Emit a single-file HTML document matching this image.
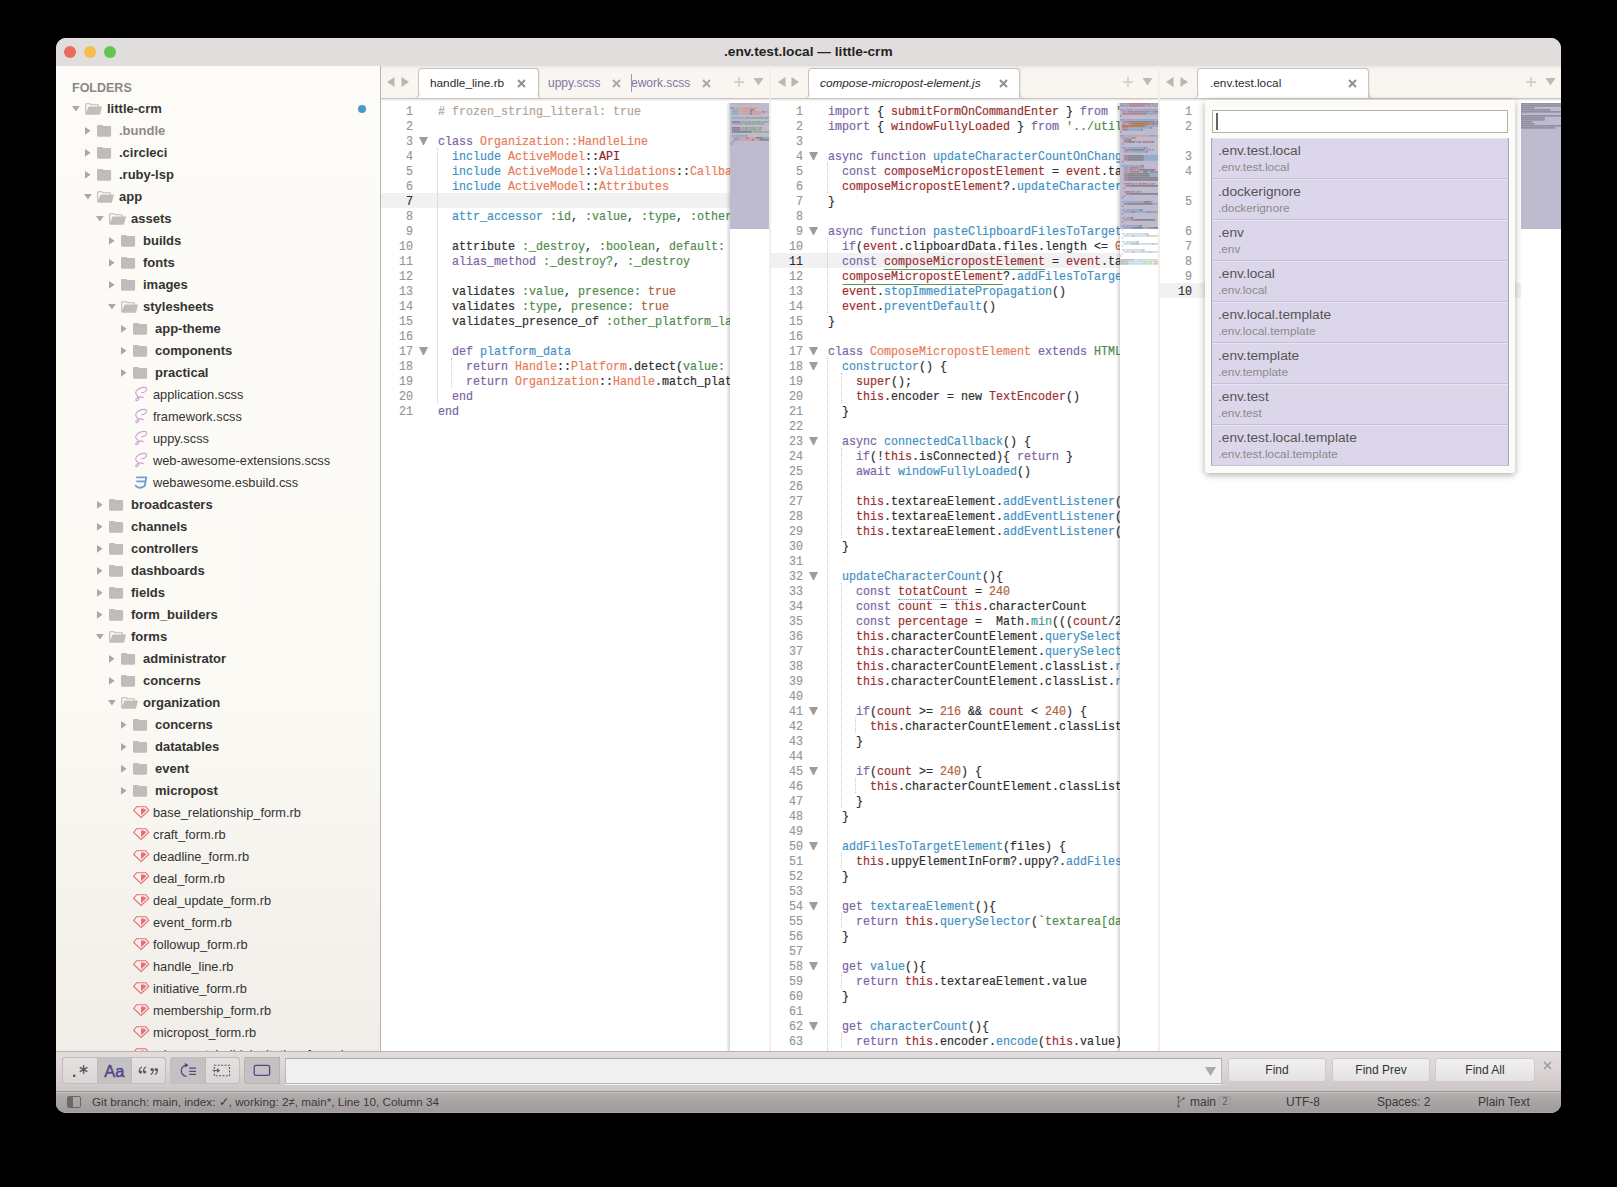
<!DOCTYPE html>
<html><head><meta charset="utf-8"><style>
*{margin:0;padding:0;box-sizing:border-box}
html,body{width:1617px;height:1187px;background:#000;overflow:hidden}
body{position:relative;font-family:"Liberation Sans",sans-serif}
div,span.a{position:absolute}
svg{display:block}
.code{font-family:"Liberation Mono",monospace;font-size:13px;line-height:15px;color:#2e2e2e;white-space:pre;transform:scaleX(0.8974358974358975);transform-origin:0 0;-webkit-text-stroke:0.2px}
.c{color:#b4a393} .k{color:#7b63a6} .t{color:#e97a55} .f{color:#3f91c2}
.s{color:#4f8c4c} .n{color:#b2603a} .v{color:#9a2e2f} .m{color:#3a9f92} .r{color:#8e2426}
.u{color:#9a2e2f;border-bottom:1px solid #5a9a58}
.w{color:#9a2e2f;border-bottom:1px dotted #4a8fc8}
.ln{font-family:"Liberation Mono",monospace;font-size:13px;line-height:15px;color:#9a9a9a;text-align:right;white-space:pre}
.side{font-size:12.8px;color:#333;line-height:22px;white-space:pre}
.fold{width:0;height:0;border-left:4.5px solid transparent;border-right:4.5px solid transparent;border-top:8px solid #9d9d9d}
.tri-r{width:0;height:0;border-top:3.5px solid transparent;border-bottom:3.5px solid transparent;border-left:6.5px solid #aaa7a4}
.tri-d{width:0;height:0;border-left:3.75px solid transparent;border-right:3.75px solid transparent;border-top:6px solid #aaa7a4}
</style></head>
<body>
<div style="left:56px;top:38px;width:1505px;height:1075px;border-radius:10px;overflow:hidden;background:#fff"><div style="left:0px;top:0px;width:1505px;height:28px;background:#e2dddd"></div><div style="left:8px;top:8px;width:12px;height:12px;background:#ec6a5e;border-radius:50%"></div><div style="left:28px;top:8px;width:12px;height:12px;background:#f4bf4f;border-radius:50%"></div><div style="left:48px;top:8px;width:12px;height:12px;background:#61c554;border-radius:50%"></div><div style="left:668px;top:6px;white-space:pre;font-weight:bold;font-size:13.7px;color:#1e2324;line-height:16px">.env.test.local — little-crm</div><div style="left:0px;top:28px;width:324px;height:985px;background:linear-gradient(#fdfbf7 0%,#fcfaf5 62%,#f1eee9 100%)"></div><div style="left:324px;top:28px;width:1px;height:985px;background:#b9b4b1"></div><div style="left:16px;top:42px;white-space:pre;font-weight:bold;font-size:12.5px;color:#8a8886;line-height:16px">FOLDERS</div><div style="left:16px;top:60px;width:20px;height:20px;"><svg width="20" height="20" viewBox="0 0 20 20"><path d="M0 8 L7.8 8 L3.9 13.4 Z" fill="#aba7a4"/></svg></div><div style="left:28px;top:60px;width:20px;height:20px;"><svg width="20" height="20" viewBox="0 0 20 20"><path d="M1.7 15.5 L1.7 6.3 Q1.7 5.7 2.3 5.7 L6.3 5.7 L7 6.7 L13.4 6.7 Q14.3 6.7 14.3 7.6 L14.3 9" fill="none" stroke="#bdb9b6" stroke-width="1.1"/><path d="M4.2 9.3 Q4.4 8.6 5.1 8.6 L17.4 8.6 Q18.1 8.6 17.9 9.3 L16.1 15.9 Q15.9 16.7 15.1 16.7 L2.2 16.7 Q1.3 16.7 1.5 15.9 Z" fill="#c1bdba"/></svg></div><div style="left:51px;top:60px;white-space:pre;font-size:13px;font-weight:bold;color:#333;line-height:22px">little-crm</div><div style="left:28px;top:82px;width:20px;height:20px;"><svg width="20" height="20" viewBox="0 0 20 20"><path d="M1 6.9 L6.6 10.85 L1 14.8 Z" fill="#aba7a4"/></svg></div><div style="left:40px;top:82px;width:20px;height:20px;"><svg width="20" height="20" viewBox="0 0 20 20"><path d="M1 6.3 Q1 5.1 2.2 5.1 L6.2 5.1 Q6.8 5.1 7.2 6.1 L14 6.1 Q15.1 6.1 15.1 7.2 L15.1 15.6 Q15.1 16.7 14 16.7 L2.1 16.7 Q1 16.7 1 15.6 Z" fill="#c0bcb9"/></svg></div><div style="left:63px;top:82px;white-space:pre;font-size:13px;font-weight:bold;color:#8d8a88;line-height:22px">.bundle</div><div style="left:28px;top:104px;width:20px;height:20px;"><svg width="20" height="20" viewBox="0 0 20 20"><path d="M1 6.9 L6.6 10.85 L1 14.8 Z" fill="#aba7a4"/></svg></div><div style="left:40px;top:104px;width:20px;height:20px;"><svg width="20" height="20" viewBox="0 0 20 20"><path d="M1 6.3 Q1 5.1 2.2 5.1 L6.2 5.1 Q6.8 5.1 7.2 6.1 L14 6.1 Q15.1 6.1 15.1 7.2 L15.1 15.6 Q15.1 16.7 14 16.7 L2.1 16.7 Q1 16.7 1 15.6 Z" fill="#c0bcb9"/></svg></div><div style="left:63px;top:104px;white-space:pre;font-size:13px;font-weight:bold;color:#333;line-height:22px">.circleci</div><div style="left:28px;top:126px;width:20px;height:20px;"><svg width="20" height="20" viewBox="0 0 20 20"><path d="M1 6.9 L6.6 10.85 L1 14.8 Z" fill="#aba7a4"/></svg></div><div style="left:40px;top:126px;width:20px;height:20px;"><svg width="20" height="20" viewBox="0 0 20 20"><path d="M1 6.3 Q1 5.1 2.2 5.1 L6.2 5.1 Q6.8 5.1 7.2 6.1 L14 6.1 Q15.1 6.1 15.1 7.2 L15.1 15.6 Q15.1 16.7 14 16.7 L2.1 16.7 Q1 16.7 1 15.6 Z" fill="#c0bcb9"/></svg></div><div style="left:63px;top:126px;white-space:pre;font-size:13px;font-weight:bold;color:#333;line-height:22px">.ruby-lsp</div><div style="left:28px;top:148px;width:20px;height:20px;"><svg width="20" height="20" viewBox="0 0 20 20"><path d="M0 8 L7.8 8 L3.9 13.4 Z" fill="#aba7a4"/></svg></div><div style="left:40px;top:148px;width:20px;height:20px;"><svg width="20" height="20" viewBox="0 0 20 20"><path d="M1.7 15.5 L1.7 6.3 Q1.7 5.7 2.3 5.7 L6.3 5.7 L7 6.7 L13.4 6.7 Q14.3 6.7 14.3 7.6 L14.3 9" fill="none" stroke="#bdb9b6" stroke-width="1.1"/><path d="M4.2 9.3 Q4.4 8.6 5.1 8.6 L17.4 8.6 Q18.1 8.6 17.9 9.3 L16.1 15.9 Q15.9 16.7 15.1 16.7 L2.2 16.7 Q1.3 16.7 1.5 15.9 Z" fill="#c1bdba"/></svg></div><div style="left:63px;top:148px;white-space:pre;font-size:13px;font-weight:bold;color:#333;line-height:22px">app</div><div style="left:40px;top:170px;width:20px;height:20px;"><svg width="20" height="20" viewBox="0 0 20 20"><path d="M0 8 L7.8 8 L3.9 13.4 Z" fill="#aba7a4"/></svg></div><div style="left:52px;top:170px;width:20px;height:20px;"><svg width="20" height="20" viewBox="0 0 20 20"><path d="M1.7 15.5 L1.7 6.3 Q1.7 5.7 2.3 5.7 L6.3 5.7 L7 6.7 L13.4 6.7 Q14.3 6.7 14.3 7.6 L14.3 9" fill="none" stroke="#bdb9b6" stroke-width="1.1"/><path d="M4.2 9.3 Q4.4 8.6 5.1 8.6 L17.4 8.6 Q18.1 8.6 17.9 9.3 L16.1 15.9 Q15.9 16.7 15.1 16.7 L2.2 16.7 Q1.3 16.7 1.5 15.9 Z" fill="#c1bdba"/></svg></div><div style="left:75px;top:170px;white-space:pre;font-size:13px;font-weight:bold;color:#333;line-height:22px">assets</div><div style="left:52px;top:192px;width:20px;height:20px;"><svg width="20" height="20" viewBox="0 0 20 20"><path d="M1 6.9 L6.6 10.85 L1 14.8 Z" fill="#aba7a4"/></svg></div><div style="left:64px;top:192px;width:20px;height:20px;"><svg width="20" height="20" viewBox="0 0 20 20"><path d="M1 6.3 Q1 5.1 2.2 5.1 L6.2 5.1 Q6.8 5.1 7.2 6.1 L14 6.1 Q15.1 6.1 15.1 7.2 L15.1 15.6 Q15.1 16.7 14 16.7 L2.1 16.7 Q1 16.7 1 15.6 Z" fill="#c0bcb9"/></svg></div><div style="left:87px;top:192px;white-space:pre;font-size:13px;font-weight:bold;color:#333;line-height:22px">builds</div><div style="left:52px;top:214px;width:20px;height:20px;"><svg width="20" height="20" viewBox="0 0 20 20"><path d="M1 6.9 L6.6 10.85 L1 14.8 Z" fill="#aba7a4"/></svg></div><div style="left:64px;top:214px;width:20px;height:20px;"><svg width="20" height="20" viewBox="0 0 20 20"><path d="M1 6.3 Q1 5.1 2.2 5.1 L6.2 5.1 Q6.8 5.1 7.2 6.1 L14 6.1 Q15.1 6.1 15.1 7.2 L15.1 15.6 Q15.1 16.7 14 16.7 L2.1 16.7 Q1 16.7 1 15.6 Z" fill="#c0bcb9"/></svg></div><div style="left:87px;top:214px;white-space:pre;font-size:13px;font-weight:bold;color:#333;line-height:22px">fonts</div><div style="left:52px;top:236px;width:20px;height:20px;"><svg width="20" height="20" viewBox="0 0 20 20"><path d="M1 6.9 L6.6 10.85 L1 14.8 Z" fill="#aba7a4"/></svg></div><div style="left:64px;top:236px;width:20px;height:20px;"><svg width="20" height="20" viewBox="0 0 20 20"><path d="M1 6.3 Q1 5.1 2.2 5.1 L6.2 5.1 Q6.8 5.1 7.2 6.1 L14 6.1 Q15.1 6.1 15.1 7.2 L15.1 15.6 Q15.1 16.7 14 16.7 L2.1 16.7 Q1 16.7 1 15.6 Z" fill="#c0bcb9"/></svg></div><div style="left:87px;top:236px;white-space:pre;font-size:13px;font-weight:bold;color:#333;line-height:22px">images</div><div style="left:52px;top:258px;width:20px;height:20px;"><svg width="20" height="20" viewBox="0 0 20 20"><path d="M0 8 L7.8 8 L3.9 13.4 Z" fill="#aba7a4"/></svg></div><div style="left:64px;top:258px;width:20px;height:20px;"><svg width="20" height="20" viewBox="0 0 20 20"><path d="M1.7 15.5 L1.7 6.3 Q1.7 5.7 2.3 5.7 L6.3 5.7 L7 6.7 L13.4 6.7 Q14.3 6.7 14.3 7.6 L14.3 9" fill="none" stroke="#bdb9b6" stroke-width="1.1"/><path d="M4.2 9.3 Q4.4 8.6 5.1 8.6 L17.4 8.6 Q18.1 8.6 17.9 9.3 L16.1 15.9 Q15.9 16.7 15.1 16.7 L2.2 16.7 Q1.3 16.7 1.5 15.9 Z" fill="#c1bdba"/></svg></div><div style="left:87px;top:258px;white-space:pre;font-size:13px;font-weight:bold;color:#333;line-height:22px">stylesheets</div><div style="left:64px;top:280px;width:20px;height:20px;"><svg width="20" height="20" viewBox="0 0 20 20"><path d="M1 6.9 L6.6 10.85 L1 14.8 Z" fill="#aba7a4"/></svg></div><div style="left:76px;top:280px;width:20px;height:20px;"><svg width="20" height="20" viewBox="0 0 20 20"><path d="M1 6.3 Q1 5.1 2.2 5.1 L6.2 5.1 Q6.8 5.1 7.2 6.1 L14 6.1 Q15.1 6.1 15.1 7.2 L15.1 15.6 Q15.1 16.7 14 16.7 L2.1 16.7 Q1 16.7 1 15.6 Z" fill="#c0bcb9"/></svg></div><div style="left:99px;top:280px;white-space:pre;font-size:13px;font-weight:bold;color:#333;line-height:22px">app-theme</div><div style="left:64px;top:302px;width:20px;height:20px;"><svg width="20" height="20" viewBox="0 0 20 20"><path d="M1 6.9 L6.6 10.85 L1 14.8 Z" fill="#aba7a4"/></svg></div><div style="left:76px;top:302px;width:20px;height:20px;"><svg width="20" height="20" viewBox="0 0 20 20"><path d="M1 6.3 Q1 5.1 2.2 5.1 L6.2 5.1 Q6.8 5.1 7.2 6.1 L14 6.1 Q15.1 6.1 15.1 7.2 L15.1 15.6 Q15.1 16.7 14 16.7 L2.1 16.7 Q1 16.7 1 15.6 Z" fill="#c0bcb9"/></svg></div><div style="left:99px;top:302px;white-space:pre;font-size:13px;font-weight:bold;color:#333;line-height:22px">components</div><div style="left:64px;top:324px;width:20px;height:20px;"><svg width="20" height="20" viewBox="0 0 20 20"><path d="M1 6.9 L6.6 10.85 L1 14.8 Z" fill="#aba7a4"/></svg></div><div style="left:76px;top:324px;width:20px;height:20px;"><svg width="20" height="20" viewBox="0 0 20 20"><path d="M1 6.3 Q1 5.1 2.2 5.1 L6.2 5.1 Q6.8 5.1 7.2 6.1 L14 6.1 Q15.1 6.1 15.1 7.2 L15.1 15.6 Q15.1 16.7 14 16.7 L2.1 16.7 Q1 16.7 1 15.6 Z" fill="#c0bcb9"/></svg></div><div style="left:99px;top:324px;white-space:pre;font-size:13px;font-weight:bold;color:#333;line-height:22px">practical</div><div style="left:74px;top:346px;width:20px;height:20px;"><svg width="20" height="20" viewBox="0 0 20 20"><path d="M11.5 8.8 C14 8.7 16.9 7 16.6 4.8 C16.3 2.6 11.5 3.1 8.2 5.3 C4.8 7.6 5 10 7.6 12 C9.3 13.3 9.4 15.6 7.2 16.5 C5.6 17.1 5.1 15.6 6.8 14.3 C8.4 13.1 11 12.4 13.3 13.7" fill="none" stroke="#cf9fd8" stroke-width="1.1" stroke-linecap="round"/></svg></div><div style="left:97px;top:346px;white-space:pre;font-size:12.8px;color:#333;line-height:22px">application.scss</div><div style="left:74px;top:368px;width:20px;height:20px;"><svg width="20" height="20" viewBox="0 0 20 20"><path d="M11.5 8.8 C14 8.7 16.9 7 16.6 4.8 C16.3 2.6 11.5 3.1 8.2 5.3 C4.8 7.6 5 10 7.6 12 C9.3 13.3 9.4 15.6 7.2 16.5 C5.6 17.1 5.1 15.6 6.8 14.3 C8.4 13.1 11 12.4 13.3 13.7" fill="none" stroke="#cf9fd8" stroke-width="1.1" stroke-linecap="round"/></svg></div><div style="left:97px;top:368px;white-space:pre;font-size:12.8px;color:#333;line-height:22px">framework.scss</div><div style="left:74px;top:390px;width:20px;height:20px;"><svg width="20" height="20" viewBox="0 0 20 20"><path d="M11.5 8.8 C14 8.7 16.9 7 16.6 4.8 C16.3 2.6 11.5 3.1 8.2 5.3 C4.8 7.6 5 10 7.6 12 C9.3 13.3 9.4 15.6 7.2 16.5 C5.6 17.1 5.1 15.6 6.8 14.3 C8.4 13.1 11 12.4 13.3 13.7" fill="none" stroke="#cf9fd8" stroke-width="1.1" stroke-linecap="round"/></svg></div><div style="left:97px;top:390px;white-space:pre;font-size:12.8px;color:#333;line-height:22px">uppy.scss</div><div style="left:74px;top:412px;width:20px;height:20px;"><svg width="20" height="20" viewBox="0 0 20 20"><path d="M11.5 8.8 C14 8.7 16.9 7 16.6 4.8 C16.3 2.6 11.5 3.1 8.2 5.3 C4.8 7.6 5 10 7.6 12 C9.3 13.3 9.4 15.6 7.2 16.5 C5.6 17.1 5.1 15.6 6.8 14.3 C8.4 13.1 11 12.4 13.3 13.7" fill="none" stroke="#cf9fd8" stroke-width="1.1" stroke-linecap="round"/></svg></div><div style="left:97px;top:412px;white-space:pre;font-size:12.8px;color:#333;line-height:22px">web-awesome-extensions.scss</div><div style="left:74px;top:434px;width:20px;height:20px;"><svg width="20" height="20" viewBox="0 0 20 20"><path d="M7 5.4 L16.4 5.4 L14.6 14 Q12 15.7 9.4 15.8 Q7.3 15.2 5.6 13.6" fill="none" stroke="#6c9fd4" stroke-width="1.8" stroke-linejoin="round" stroke-linecap="round"/><path d="M6.3 9.4 L15 9.4" stroke="#6c9fd4" stroke-width="1.8"/></svg></div><div style="left:97px;top:434px;white-space:pre;font-size:12.8px;color:#333;line-height:22px">webawesome.esbuild.css</div><div style="left:40px;top:456px;width:20px;height:20px;"><svg width="20" height="20" viewBox="0 0 20 20"><path d="M1 6.9 L6.6 10.85 L1 14.8 Z" fill="#aba7a4"/></svg></div><div style="left:52px;top:456px;width:20px;height:20px;"><svg width="20" height="20" viewBox="0 0 20 20"><path d="M1 6.3 Q1 5.1 2.2 5.1 L6.2 5.1 Q6.8 5.1 7.2 6.1 L14 6.1 Q15.1 6.1 15.1 7.2 L15.1 15.6 Q15.1 16.7 14 16.7 L2.1 16.7 Q1 16.7 1 15.6 Z" fill="#c0bcb9"/></svg></div><div style="left:75px;top:456px;white-space:pre;font-size:13px;font-weight:bold;color:#333;line-height:22px">broadcasters</div><div style="left:40px;top:478px;width:20px;height:20px;"><svg width="20" height="20" viewBox="0 0 20 20"><path d="M1 6.9 L6.6 10.85 L1 14.8 Z" fill="#aba7a4"/></svg></div><div style="left:52px;top:478px;width:20px;height:20px;"><svg width="20" height="20" viewBox="0 0 20 20"><path d="M1 6.3 Q1 5.1 2.2 5.1 L6.2 5.1 Q6.8 5.1 7.2 6.1 L14 6.1 Q15.1 6.1 15.1 7.2 L15.1 15.6 Q15.1 16.7 14 16.7 L2.1 16.7 Q1 16.7 1 15.6 Z" fill="#c0bcb9"/></svg></div><div style="left:75px;top:478px;white-space:pre;font-size:13px;font-weight:bold;color:#333;line-height:22px">channels</div><div style="left:40px;top:500px;width:20px;height:20px;"><svg width="20" height="20" viewBox="0 0 20 20"><path d="M1 6.9 L6.6 10.85 L1 14.8 Z" fill="#aba7a4"/></svg></div><div style="left:52px;top:500px;width:20px;height:20px;"><svg width="20" height="20" viewBox="0 0 20 20"><path d="M1 6.3 Q1 5.1 2.2 5.1 L6.2 5.1 Q6.8 5.1 7.2 6.1 L14 6.1 Q15.1 6.1 15.1 7.2 L15.1 15.6 Q15.1 16.7 14 16.7 L2.1 16.7 Q1 16.7 1 15.6 Z" fill="#c0bcb9"/></svg></div><div style="left:75px;top:500px;white-space:pre;font-size:13px;font-weight:bold;color:#333;line-height:22px">controllers</div><div style="left:40px;top:522px;width:20px;height:20px;"><svg width="20" height="20" viewBox="0 0 20 20"><path d="M1 6.9 L6.6 10.85 L1 14.8 Z" fill="#aba7a4"/></svg></div><div style="left:52px;top:522px;width:20px;height:20px;"><svg width="20" height="20" viewBox="0 0 20 20"><path d="M1 6.3 Q1 5.1 2.2 5.1 L6.2 5.1 Q6.8 5.1 7.2 6.1 L14 6.1 Q15.1 6.1 15.1 7.2 L15.1 15.6 Q15.1 16.7 14 16.7 L2.1 16.7 Q1 16.7 1 15.6 Z" fill="#c0bcb9"/></svg></div><div style="left:75px;top:522px;white-space:pre;font-size:13px;font-weight:bold;color:#333;line-height:22px">dashboards</div><div style="left:40px;top:544px;width:20px;height:20px;"><svg width="20" height="20" viewBox="0 0 20 20"><path d="M1 6.9 L6.6 10.85 L1 14.8 Z" fill="#aba7a4"/></svg></div><div style="left:52px;top:544px;width:20px;height:20px;"><svg width="20" height="20" viewBox="0 0 20 20"><path d="M1 6.3 Q1 5.1 2.2 5.1 L6.2 5.1 Q6.8 5.1 7.2 6.1 L14 6.1 Q15.1 6.1 15.1 7.2 L15.1 15.6 Q15.1 16.7 14 16.7 L2.1 16.7 Q1 16.7 1 15.6 Z" fill="#c0bcb9"/></svg></div><div style="left:75px;top:544px;white-space:pre;font-size:13px;font-weight:bold;color:#333;line-height:22px">fields</div><div style="left:40px;top:566px;width:20px;height:20px;"><svg width="20" height="20" viewBox="0 0 20 20"><path d="M1 6.9 L6.6 10.85 L1 14.8 Z" fill="#aba7a4"/></svg></div><div style="left:52px;top:566px;width:20px;height:20px;"><svg width="20" height="20" viewBox="0 0 20 20"><path d="M1 6.3 Q1 5.1 2.2 5.1 L6.2 5.1 Q6.8 5.1 7.2 6.1 L14 6.1 Q15.1 6.1 15.1 7.2 L15.1 15.6 Q15.1 16.7 14 16.7 L2.1 16.7 Q1 16.7 1 15.6 Z" fill="#c0bcb9"/></svg></div><div style="left:75px;top:566px;white-space:pre;font-size:13px;font-weight:bold;color:#333;line-height:22px">form_builders</div><div style="left:40px;top:588px;width:20px;height:20px;"><svg width="20" height="20" viewBox="0 0 20 20"><path d="M0 8 L7.8 8 L3.9 13.4 Z" fill="#aba7a4"/></svg></div><div style="left:52px;top:588px;width:20px;height:20px;"><svg width="20" height="20" viewBox="0 0 20 20"><path d="M1.7 15.5 L1.7 6.3 Q1.7 5.7 2.3 5.7 L6.3 5.7 L7 6.7 L13.4 6.7 Q14.3 6.7 14.3 7.6 L14.3 9" fill="none" stroke="#bdb9b6" stroke-width="1.1"/><path d="M4.2 9.3 Q4.4 8.6 5.1 8.6 L17.4 8.6 Q18.1 8.6 17.9 9.3 L16.1 15.9 Q15.9 16.7 15.1 16.7 L2.2 16.7 Q1.3 16.7 1.5 15.9 Z" fill="#c1bdba"/></svg></div><div style="left:75px;top:588px;white-space:pre;font-size:13px;font-weight:bold;color:#333;line-height:22px">forms</div><div style="left:52px;top:610px;width:20px;height:20px;"><svg width="20" height="20" viewBox="0 0 20 20"><path d="M1 6.9 L6.6 10.85 L1 14.8 Z" fill="#aba7a4"/></svg></div><div style="left:64px;top:610px;width:20px;height:20px;"><svg width="20" height="20" viewBox="0 0 20 20"><path d="M1 6.3 Q1 5.1 2.2 5.1 L6.2 5.1 Q6.8 5.1 7.2 6.1 L14 6.1 Q15.1 6.1 15.1 7.2 L15.1 15.6 Q15.1 16.7 14 16.7 L2.1 16.7 Q1 16.7 1 15.6 Z" fill="#c0bcb9"/></svg></div><div style="left:87px;top:610px;white-space:pre;font-size:13px;font-weight:bold;color:#333;line-height:22px">administrator</div><div style="left:52px;top:632px;width:20px;height:20px;"><svg width="20" height="20" viewBox="0 0 20 20"><path d="M1 6.9 L6.6 10.85 L1 14.8 Z" fill="#aba7a4"/></svg></div><div style="left:64px;top:632px;width:20px;height:20px;"><svg width="20" height="20" viewBox="0 0 20 20"><path d="M1 6.3 Q1 5.1 2.2 5.1 L6.2 5.1 Q6.8 5.1 7.2 6.1 L14 6.1 Q15.1 6.1 15.1 7.2 L15.1 15.6 Q15.1 16.7 14 16.7 L2.1 16.7 Q1 16.7 1 15.6 Z" fill="#c0bcb9"/></svg></div><div style="left:87px;top:632px;white-space:pre;font-size:13px;font-weight:bold;color:#333;line-height:22px">concerns</div><div style="left:52px;top:654px;width:20px;height:20px;"><svg width="20" height="20" viewBox="0 0 20 20"><path d="M0 8 L7.8 8 L3.9 13.4 Z" fill="#aba7a4"/></svg></div><div style="left:64px;top:654px;width:20px;height:20px;"><svg width="20" height="20" viewBox="0 0 20 20"><path d="M1.7 15.5 L1.7 6.3 Q1.7 5.7 2.3 5.7 L6.3 5.7 L7 6.7 L13.4 6.7 Q14.3 6.7 14.3 7.6 L14.3 9" fill="none" stroke="#bdb9b6" stroke-width="1.1"/><path d="M4.2 9.3 Q4.4 8.6 5.1 8.6 L17.4 8.6 Q18.1 8.6 17.9 9.3 L16.1 15.9 Q15.9 16.7 15.1 16.7 L2.2 16.7 Q1.3 16.7 1.5 15.9 Z" fill="#c1bdba"/></svg></div><div style="left:87px;top:654px;white-space:pre;font-size:13px;font-weight:bold;color:#333;line-height:22px">organization</div><div style="left:64px;top:676px;width:20px;height:20px;"><svg width="20" height="20" viewBox="0 0 20 20"><path d="M1 6.9 L6.6 10.85 L1 14.8 Z" fill="#aba7a4"/></svg></div><div style="left:76px;top:676px;width:20px;height:20px;"><svg width="20" height="20" viewBox="0 0 20 20"><path d="M1 6.3 Q1 5.1 2.2 5.1 L6.2 5.1 Q6.8 5.1 7.2 6.1 L14 6.1 Q15.1 6.1 15.1 7.2 L15.1 15.6 Q15.1 16.7 14 16.7 L2.1 16.7 Q1 16.7 1 15.6 Z" fill="#c0bcb9"/></svg></div><div style="left:99px;top:676px;white-space:pre;font-size:13px;font-weight:bold;color:#333;line-height:22px">concerns</div><div style="left:64px;top:698px;width:20px;height:20px;"><svg width="20" height="20" viewBox="0 0 20 20"><path d="M1 6.9 L6.6 10.85 L1 14.8 Z" fill="#aba7a4"/></svg></div><div style="left:76px;top:698px;width:20px;height:20px;"><svg width="20" height="20" viewBox="0 0 20 20"><path d="M1 6.3 Q1 5.1 2.2 5.1 L6.2 5.1 Q6.8 5.1 7.2 6.1 L14 6.1 Q15.1 6.1 15.1 7.2 L15.1 15.6 Q15.1 16.7 14 16.7 L2.1 16.7 Q1 16.7 1 15.6 Z" fill="#c0bcb9"/></svg></div><div style="left:99px;top:698px;white-space:pre;font-size:13px;font-weight:bold;color:#333;line-height:22px">datatables</div><div style="left:64px;top:720px;width:20px;height:20px;"><svg width="20" height="20" viewBox="0 0 20 20"><path d="M1 6.9 L6.6 10.85 L1 14.8 Z" fill="#aba7a4"/></svg></div><div style="left:76px;top:720px;width:20px;height:20px;"><svg width="20" height="20" viewBox="0 0 20 20"><path d="M1 6.3 Q1 5.1 2.2 5.1 L6.2 5.1 Q6.8 5.1 7.2 6.1 L14 6.1 Q15.1 6.1 15.1 7.2 L15.1 15.6 Q15.1 16.7 14 16.7 L2.1 16.7 Q1 16.7 1 15.6 Z" fill="#c0bcb9"/></svg></div><div style="left:99px;top:720px;white-space:pre;font-size:13px;font-weight:bold;color:#333;line-height:22px">event</div><div style="left:64px;top:742px;width:20px;height:20px;"><svg width="20" height="20" viewBox="0 0 20 20"><path d="M1 6.9 L6.6 10.85 L1 14.8 Z" fill="#aba7a4"/></svg></div><div style="left:76px;top:742px;width:20px;height:20px;"><svg width="20" height="20" viewBox="0 0 20 20"><path d="M1 6.3 Q1 5.1 2.2 5.1 L6.2 5.1 Q6.8 5.1 7.2 6.1 L14 6.1 Q15.1 6.1 15.1 7.2 L15.1 15.6 Q15.1 16.7 14 16.7 L2.1 16.7 Q1 16.7 1 15.6 Z" fill="#c0bcb9"/></svg></div><div style="left:99px;top:742px;white-space:pre;font-size:13px;font-weight:bold;color:#333;line-height:22px">micropost</div><div style="left:74px;top:764px;width:20px;height:20px;"><svg width="20" height="20" viewBox="0 0 20 20"><path d="M6.6 4.7 L15.8 4.7 L18.7 8.4 L11.15 15.5 L3.6 8.4 Z" fill="none" stroke="#ea6c74" stroke-width="1.15" stroke-linejoin="miter"/><path d="M11 6.5 L13.6 6.5 Q15.8 7.2 16.1 8.6 L11 13.3 Z" fill="#ea6c74"/></svg></div><div style="left:97px;top:764px;white-space:pre;font-size:12.8px;color:#333;line-height:22px">base_relationship_form.rb</div><div style="left:74px;top:786px;width:20px;height:20px;"><svg width="20" height="20" viewBox="0 0 20 20"><path d="M6.6 4.7 L15.8 4.7 L18.7 8.4 L11.15 15.5 L3.6 8.4 Z" fill="none" stroke="#ea6c74" stroke-width="1.15" stroke-linejoin="miter"/><path d="M11 6.5 L13.6 6.5 Q15.8 7.2 16.1 8.6 L11 13.3 Z" fill="#ea6c74"/></svg></div><div style="left:97px;top:786px;white-space:pre;font-size:12.8px;color:#333;line-height:22px">craft_form.rb</div><div style="left:74px;top:808px;width:20px;height:20px;"><svg width="20" height="20" viewBox="0 0 20 20"><path d="M6.6 4.7 L15.8 4.7 L18.7 8.4 L11.15 15.5 L3.6 8.4 Z" fill="none" stroke="#ea6c74" stroke-width="1.15" stroke-linejoin="miter"/><path d="M11 6.5 L13.6 6.5 Q15.8 7.2 16.1 8.6 L11 13.3 Z" fill="#ea6c74"/></svg></div><div style="left:97px;top:808px;white-space:pre;font-size:12.8px;color:#333;line-height:22px">deadline_form.rb</div><div style="left:74px;top:830px;width:20px;height:20px;"><svg width="20" height="20" viewBox="0 0 20 20"><path d="M6.6 4.7 L15.8 4.7 L18.7 8.4 L11.15 15.5 L3.6 8.4 Z" fill="none" stroke="#ea6c74" stroke-width="1.15" stroke-linejoin="miter"/><path d="M11 6.5 L13.6 6.5 Q15.8 7.2 16.1 8.6 L11 13.3 Z" fill="#ea6c74"/></svg></div><div style="left:97px;top:830px;white-space:pre;font-size:12.8px;color:#333;line-height:22px">deal_form.rb</div><div style="left:74px;top:852px;width:20px;height:20px;"><svg width="20" height="20" viewBox="0 0 20 20"><path d="M6.6 4.7 L15.8 4.7 L18.7 8.4 L11.15 15.5 L3.6 8.4 Z" fill="none" stroke="#ea6c74" stroke-width="1.15" stroke-linejoin="miter"/><path d="M11 6.5 L13.6 6.5 Q15.8 7.2 16.1 8.6 L11 13.3 Z" fill="#ea6c74"/></svg></div><div style="left:97px;top:852px;white-space:pre;font-size:12.8px;color:#333;line-height:22px">deal_update_form.rb</div><div style="left:74px;top:874px;width:20px;height:20px;"><svg width="20" height="20" viewBox="0 0 20 20"><path d="M6.6 4.7 L15.8 4.7 L18.7 8.4 L11.15 15.5 L3.6 8.4 Z" fill="none" stroke="#ea6c74" stroke-width="1.15" stroke-linejoin="miter"/><path d="M11 6.5 L13.6 6.5 Q15.8 7.2 16.1 8.6 L11 13.3 Z" fill="#ea6c74"/></svg></div><div style="left:97px;top:874px;white-space:pre;font-size:12.8px;color:#333;line-height:22px">event_form.rb</div><div style="left:74px;top:896px;width:20px;height:20px;"><svg width="20" height="20" viewBox="0 0 20 20"><path d="M6.6 4.7 L15.8 4.7 L18.7 8.4 L11.15 15.5 L3.6 8.4 Z" fill="none" stroke="#ea6c74" stroke-width="1.15" stroke-linejoin="miter"/><path d="M11 6.5 L13.6 6.5 Q15.8 7.2 16.1 8.6 L11 13.3 Z" fill="#ea6c74"/></svg></div><div style="left:97px;top:896px;white-space:pre;font-size:12.8px;color:#333;line-height:22px">followup_form.rb</div><div style="left:74px;top:918px;width:20px;height:20px;"><svg width="20" height="20" viewBox="0 0 20 20"><path d="M6.6 4.7 L15.8 4.7 L18.7 8.4 L11.15 15.5 L3.6 8.4 Z" fill="none" stroke="#ea6c74" stroke-width="1.15" stroke-linejoin="miter"/><path d="M11 6.5 L13.6 6.5 Q15.8 7.2 16.1 8.6 L11 13.3 Z" fill="#ea6c74"/></svg></div><div style="left:97px;top:918px;white-space:pre;font-size:12.8px;color:#333;line-height:22px">handle_line.rb</div><div style="left:74px;top:940px;width:20px;height:20px;"><svg width="20" height="20" viewBox="0 0 20 20"><path d="M6.6 4.7 L15.8 4.7 L18.7 8.4 L11.15 15.5 L3.6 8.4 Z" fill="none" stroke="#ea6c74" stroke-width="1.15" stroke-linejoin="miter"/><path d="M11 6.5 L13.6 6.5 Q15.8 7.2 16.1 8.6 L11 13.3 Z" fill="#ea6c74"/></svg></div><div style="left:97px;top:940px;white-space:pre;font-size:12.8px;color:#333;line-height:22px">initiative_form.rb</div><div style="left:74px;top:962px;width:20px;height:20px;"><svg width="20" height="20" viewBox="0 0 20 20"><path d="M6.6 4.7 L15.8 4.7 L18.7 8.4 L11.15 15.5 L3.6 8.4 Z" fill="none" stroke="#ea6c74" stroke-width="1.15" stroke-linejoin="miter"/><path d="M11 6.5 L13.6 6.5 Q15.8 7.2 16.1 8.6 L11 13.3 Z" fill="#ea6c74"/></svg></div><div style="left:97px;top:962px;white-space:pre;font-size:12.8px;color:#333;line-height:22px">membership_form.rb</div><div style="left:74px;top:984px;width:20px;height:20px;"><svg width="20" height="20" viewBox="0 0 20 20"><path d="M6.6 4.7 L15.8 4.7 L18.7 8.4 L11.15 15.5 L3.6 8.4 Z" fill="none" stroke="#ea6c74" stroke-width="1.15" stroke-linejoin="miter"/><path d="M11 6.5 L13.6 6.5 Q15.8 7.2 16.1 8.6 L11 13.3 Z" fill="#ea6c74"/></svg></div><div style="left:97px;top:984px;white-space:pre;font-size:12.8px;color:#333;line-height:22px">micropost_form.rb</div><div style="left:74px;top:1006px;width:20px;height:20px;"><svg width="20" height="20" viewBox="0 0 20 20"><path d="M6.6 4.7 L15.8 4.7 L18.7 8.4 L11.15 15.5 L3.6 8.4 Z" fill="none" stroke="#ea6c74" stroke-width="1.15" stroke-linejoin="miter"/><path d="M11 6.5 L13.6 6.5 Q15.8 7.2 16.1 8.6 L11 13.3 Z" fill="#ea6c74"/></svg></div><div style="left:97px;top:1006px;white-space:pre;font-size:12.8px;color:#333;line-height:22px">micropost_build_invitation_form.rb</div><div style="left:302px;top:67px;width:8px;height:8px;background:#4a9ac6;border-radius:50%"></div><div style="left:325px;top:28px;width:389px;height:32px;background:linear-gradient(#ebe7e3 0px,#f6f3ee 3px,#f9f6f1 6px)"></div><div style="left:325px;top:61px;width:389px;height:952px;background:#fff"></div><div style="left:331px;top:39px;width:8px;height:10px;"><svg width="8" height="10" viewBox="0 0 8 10"><path d="M7.5 0 L7.5 10 L0 5 Z" fill="#bab6b2"/></svg></div><div style="left:344.5px;top:39px;width:8px;height:10px;"><svg width="8" height="10" viewBox="0 0 8 10"><path d="M0.5 0 L0.5 10 L8 5 Z" fill="#bab6b2"/></svg></div><div style="left:362px;top:30px;width:120.5px;height:30px;background:#fff;border:1px solid #c8c3be;border-bottom:none;border-radius:4px 4px 0 0;box-shadow:1px 0 2px rgba(0,0,0,0.06)"></div><div style="left:374px;top:37px;white-space:pre;font-size:11.8px;color:#2b2b2b;line-height:16px;">handle_line.rb</div><div style="left:461px;top:41px;width:9px;height:9px;"><svg width="9" height="9" viewBox="0 0 9 9"><path d="M1 1 L8 8 M8 1 L1 8" stroke="#8f8f8f" stroke-width="1.9"/></svg></div><div style="left:357.5px;top:55px;width:6px;height:6px;"><svg width="6" height="6" viewBox="0 0 6 6"><path d="M0 5.5 Q5 5.5 5 0.5 L5 5.5 Z" fill="#fff"/><path d="M0 5.5 Q5 5.5 5 0.5" fill="none" stroke="#c8c3be" stroke-width="1"/></svg></div><div style="left:481.0px;top:55px;width:6px;height:6px;"><svg width="6" height="6" viewBox="0 0 6 6"><path d="M6 5.5 Q1 5.5 1 0.5 L1 5.5 Z" fill="#fff"/><path d="M6 5.5 Q1 5.5 1 0.5" fill="none" stroke="#c8c3be" stroke-width="1"/></svg></div><div style="left:492px;top:37px;white-space:pre;font-size:12px;color:#7f77a3;line-height:16px">uppy.scss</div><div style="left:556px;top:41px;width:9px;height:9px;"><svg width="9" height="9" viewBox="0 0 9 9"><path d="M1 1 L8 8 M8 1 L1 8" stroke="#aaa7a4" stroke-width="1.9"/></svg></div><div style="left:575px;top:35.5px;width:1px;height:18px;background:#9c95b4"></div><div style="left:576px;top:34px;width:70px;height:22px;overflow:hidden"><div style="left:-25px;top:3px;white-space:pre;font-size:12px;color:#7f77a3;line-height:16px">framework.scss</div></div><div style="left:646px;top:41px;width:9px;height:9px;"><svg width="9" height="9" viewBox="0 0 9 9"><path d="M1 1 L8 8 M8 1 L1 8" stroke="#aaa7a4" stroke-width="1.9"/></svg></div><div style="left:678px;top:39px;width:11px;height:11px;"><svg width="11" height="11" viewBox="0 0 11 11"><path d="M5 0 L5 10 M0 5 L10 5" stroke="#d6d2ce" stroke-width="1.9"/></svg></div><div style="left:696.5px;top:39px;width:11px;height:10px;"><svg width="11" height="10" viewBox="0 0 11 10"><path d="M0.5 1 L10.5 1 L5.5 8.5 Z" fill="#bdb9b5"/></svg></div><div style="left:713px;top:28px;width:2px;height:985px;background:#f5eee8"></div><div style="left:715px;top:28px;width:388px;height:32px;background:linear-gradient(#ebe7e3 0px,#f6f3ee 3px,#f9f6f1 6px)"></div><div style="left:715px;top:61px;width:388px;height:952px;background:#fff"></div><div style="left:721.5px;top:39px;width:8px;height:10px;"><svg width="8" height="10" viewBox="0 0 8 10"><path d="M7.5 0 L7.5 10 L0 5 Z" fill="#bab6b2"/></svg></div><div style="left:735.0px;top:39px;width:8px;height:10px;"><svg width="8" height="10" viewBox="0 0 8 10"><path d="M0.5 0 L0.5 10 L8 5 Z" fill="#bab6b2"/></svg></div><div style="left:752px;top:30px;width:212px;height:30px;background:#fff;border:1px solid #c8c3be;border-bottom:none;border-radius:4px 4px 0 0;box-shadow:1px 0 2px rgba(0,0,0,0.06)"></div><div style="left:764px;top:37px;white-space:pre;font-size:11.8px;color:#2b2b2b;line-height:16px;font-style:italic;">compose-micropost-element.js</div><div style="left:943px;top:41px;width:9px;height:9px;"><svg width="9" height="9" viewBox="0 0 9 9"><path d="M1 1 L8 8 M8 1 L1 8" stroke="#8f8f8f" stroke-width="1.9"/></svg></div><div style="left:747.5px;top:55px;width:6px;height:6px;"><svg width="6" height="6" viewBox="0 0 6 6"><path d="M0 5.5 Q5 5.5 5 0.5 L5 5.5 Z" fill="#fff"/><path d="M0 5.5 Q5 5.5 5 0.5" fill="none" stroke="#c8c3be" stroke-width="1"/></svg></div><div style="left:962.5px;top:55px;width:6px;height:6px;"><svg width="6" height="6" viewBox="0 0 6 6"><path d="M6 5.5 Q1 5.5 1 0.5 L1 5.5 Z" fill="#fff"/><path d="M6 5.5 Q1 5.5 1 0.5" fill="none" stroke="#c8c3be" stroke-width="1"/></svg></div><div style="left:1067px;top:39px;width:11px;height:11px;"><svg width="11" height="11" viewBox="0 0 11 11"><path d="M5 0 L5 10 M0 5 L10 5" stroke="#d6d2ce" stroke-width="1.9"/></svg></div><div style="left:1085.5px;top:39px;width:11px;height:10px;"><svg width="11" height="10" viewBox="0 0 11 10"><path d="M0.5 1 L10.5 1 L5.5 8.5 Z" fill="#bdb9b5"/></svg></div><div style="left:1102px;top:28px;width:2px;height:985px;background:#f5eee8"></div><div style="left:1104px;top:28px;width:401px;height:32px;background:linear-gradient(#ebe7e3 0px,#f6f3ee 3px,#f9f6f1 6px)"></div><div style="left:1104px;top:61px;width:401px;height:952px;background:#fff"></div><div style="left:1110px;top:39px;width:8px;height:10px;"><svg width="8" height="10" viewBox="0 0 8 10"><path d="M7.5 0 L7.5 10 L0 5 Z" fill="#bab6b2"/></svg></div><div style="left:1123.5px;top:39px;width:8px;height:10px;"><svg width="8" height="10" viewBox="0 0 8 10"><path d="M0.5 0 L0.5 10 L8 5 Z" fill="#bab6b2"/></svg></div><div style="left:1141px;top:30px;width:172px;height:30px;background:#fff;border:1px solid #c8c3be;border-bottom:none;border-radius:4px 4px 0 0;box-shadow:1px 0 2px rgba(0,0,0,0.06)"></div><div style="left:1154px;top:37px;white-space:pre;font-size:11.8px;color:#2b2b2b;line-height:16px;">.env.test.local</div><div style="left:1292px;top:41px;width:9px;height:9px;"><svg width="9" height="9" viewBox="0 0 9 9"><path d="M1 1 L8 8 M8 1 L1 8" stroke="#8f8f8f" stroke-width="1.9"/></svg></div><div style="left:1136.5px;top:55px;width:6px;height:6px;"><svg width="6" height="6" viewBox="0 0 6 6"><path d="M0 5.5 Q5 5.5 5 0.5 L5 5.5 Z" fill="#fff"/><path d="M0 5.5 Q5 5.5 5 0.5" fill="none" stroke="#c8c3be" stroke-width="1"/></svg></div><div style="left:1311.5px;top:55px;width:6px;height:6px;"><svg width="6" height="6" viewBox="0 0 6 6"><path d="M6 5.5 Q1 5.5 1 0.5 L1 5.5 Z" fill="#fff"/><path d="M6 5.5 Q1 5.5 1 0.5" fill="none" stroke="#c8c3be" stroke-width="1"/></svg></div><div style="left:1470px;top:39px;width:11px;height:11px;"><svg width="11" height="11" viewBox="0 0 11 11"><path d="M5 0 L5 10 M0 5 L10 5" stroke="#d6d2ce" stroke-width="1.9"/></svg></div><div style="left:1488.5px;top:39px;width:11px;height:10px;"><svg width="11" height="10" viewBox="0 0 11 10"><path d="M0.5 1 L10.5 1 L5.5 8.5 Z" fill="#bdb9b5"/></svg></div><div style="left:325px;top:60px;width:388px;height:1px;background:#c9c5c0"></div><div style="left:325px;top:61px;width:388px;height:2px;background:linear-gradient(rgba(200,195,190,0.55),rgba(255,255,255,0))"></div><div style="left:715px;top:60px;width:387px;height:1px;background:#c9c5c0"></div><div style="left:715px;top:61px;width:387px;height:2px;background:linear-gradient(rgba(200,195,190,0.55),rgba(255,255,255,0))"></div><div style="left:1104px;top:60px;width:401px;height:1px;background:#c9c5c0"></div><div style="left:1104px;top:61px;width:401px;height:2px;background:linear-gradient(rgba(200,195,190,0.55),rgba(255,255,255,0))"></div><div style="left:325px;top:155px;width:349px;height:15px;background:#f1f1f3"></div><div style="left:316.5px;top:66px;white-space:pre;width:40px;text-align:right;font-family:Liberation Mono,monospace;font-size:13px;line-height:15px;color:#8f9697;transform:scaleX(0.8974358974358975);transform-origin:100% 0;-webkit-text-stroke:0.15px">1</div><div style="left:316.5px;top:81px;white-space:pre;width:40px;text-align:right;font-family:Liberation Mono,monospace;font-size:13px;line-height:15px;color:#8f9697;transform:scaleX(0.8974358974358975);transform-origin:100% 0;-webkit-text-stroke:0.15px">2</div><div style="left:316.5px;top:96px;white-space:pre;width:40px;text-align:right;font-family:Liberation Mono,monospace;font-size:13px;line-height:15px;color:#8f9697;transform:scaleX(0.8974358974358975);transform-origin:100% 0;-webkit-text-stroke:0.15px">3</div><div style="left:316.5px;top:111px;white-space:pre;width:40px;text-align:right;font-family:Liberation Mono,monospace;font-size:13px;line-height:15px;color:#8f9697;transform:scaleX(0.8974358974358975);transform-origin:100% 0;-webkit-text-stroke:0.15px">4</div><div style="left:316.5px;top:126px;white-space:pre;width:40px;text-align:right;font-family:Liberation Mono,monospace;font-size:13px;line-height:15px;color:#8f9697;transform:scaleX(0.8974358974358975);transform-origin:100% 0;-webkit-text-stroke:0.15px">5</div><div style="left:316.5px;top:141px;white-space:pre;width:40px;text-align:right;font-family:Liberation Mono,monospace;font-size:13px;line-height:15px;color:#8f9697;transform:scaleX(0.8974358974358975);transform-origin:100% 0;-webkit-text-stroke:0.15px">6</div><div style="left:316.5px;top:156px;white-space:pre;width:40px;text-align:right;font-family:Liberation Mono,monospace;font-size:13px;line-height:15px;color:#2e2e2e;transform:scaleX(0.8974358974358975);transform-origin:100% 0;-webkit-text-stroke:0.15px">7</div><div style="left:316.5px;top:171px;white-space:pre;width:40px;text-align:right;font-family:Liberation Mono,monospace;font-size:13px;line-height:15px;color:#8f9697;transform:scaleX(0.8974358974358975);transform-origin:100% 0;-webkit-text-stroke:0.15px">8</div><div style="left:316.5px;top:186px;white-space:pre;width:40px;text-align:right;font-family:Liberation Mono,monospace;font-size:13px;line-height:15px;color:#8f9697;transform:scaleX(0.8974358974358975);transform-origin:100% 0;-webkit-text-stroke:0.15px">9</div><div style="left:316.5px;top:201px;white-space:pre;width:40px;text-align:right;font-family:Liberation Mono,monospace;font-size:13px;line-height:15px;color:#8f9697;transform:scaleX(0.8974358974358975);transform-origin:100% 0;-webkit-text-stroke:0.15px">10</div><div style="left:316.5px;top:216px;white-space:pre;width:40px;text-align:right;font-family:Liberation Mono,monospace;font-size:13px;line-height:15px;color:#8f9697;transform:scaleX(0.8974358974358975);transform-origin:100% 0;-webkit-text-stroke:0.15px">11</div><div style="left:316.5px;top:231px;white-space:pre;width:40px;text-align:right;font-family:Liberation Mono,monospace;font-size:13px;line-height:15px;color:#8f9697;transform:scaleX(0.8974358974358975);transform-origin:100% 0;-webkit-text-stroke:0.15px">12</div><div style="left:316.5px;top:246px;white-space:pre;width:40px;text-align:right;font-family:Liberation Mono,monospace;font-size:13px;line-height:15px;color:#8f9697;transform:scaleX(0.8974358974358975);transform-origin:100% 0;-webkit-text-stroke:0.15px">13</div><div style="left:316.5px;top:261px;white-space:pre;width:40px;text-align:right;font-family:Liberation Mono,monospace;font-size:13px;line-height:15px;color:#8f9697;transform:scaleX(0.8974358974358975);transform-origin:100% 0;-webkit-text-stroke:0.15px">14</div><div style="left:316.5px;top:276px;white-space:pre;width:40px;text-align:right;font-family:Liberation Mono,monospace;font-size:13px;line-height:15px;color:#8f9697;transform:scaleX(0.8974358974358975);transform-origin:100% 0;-webkit-text-stroke:0.15px">15</div><div style="left:316.5px;top:291px;white-space:pre;width:40px;text-align:right;font-family:Liberation Mono,monospace;font-size:13px;line-height:15px;color:#8f9697;transform:scaleX(0.8974358974358975);transform-origin:100% 0;-webkit-text-stroke:0.15px">16</div><div style="left:316.5px;top:306px;white-space:pre;width:40px;text-align:right;font-family:Liberation Mono,monospace;font-size:13px;line-height:15px;color:#8f9697;transform:scaleX(0.8974358974358975);transform-origin:100% 0;-webkit-text-stroke:0.15px">17</div><div style="left:316.5px;top:321px;white-space:pre;width:40px;text-align:right;font-family:Liberation Mono,monospace;font-size:13px;line-height:15px;color:#8f9697;transform:scaleX(0.8974358974358975);transform-origin:100% 0;-webkit-text-stroke:0.15px">18</div><div style="left:316.5px;top:336px;white-space:pre;width:40px;text-align:right;font-family:Liberation Mono,monospace;font-size:13px;line-height:15px;color:#8f9697;transform:scaleX(0.8974358974358975);transform-origin:100% 0;-webkit-text-stroke:0.15px">19</div><div style="left:316.5px;top:351px;white-space:pre;width:40px;text-align:right;font-family:Liberation Mono,monospace;font-size:13px;line-height:15px;color:#8f9697;transform:scaleX(0.8974358974358975);transform-origin:100% 0;-webkit-text-stroke:0.15px">20</div><div style="left:316.5px;top:366px;white-space:pre;width:40px;text-align:right;font-family:Liberation Mono,monospace;font-size:13px;line-height:15px;color:#8f9697;transform:scaleX(0.8974358974358975);transform-origin:100% 0;-webkit-text-stroke:0.15px">21</div><div class="fold" style="left:363px;top:99px;width:9px;height:8px;"></div><div class="fold" style="left:363px;top:309px;width:9px;height:8px;"></div><div style="left:381px;top:110px;width:1px;height:255px;border-left:1px dotted #c8c8c8"></div><div style="left:395px;top:320px;width:1px;height:30px;border-left:1px dotted #c8c8c8"></div><div style="left:325px;top:65px;width:349px;height:948px;overflow:hidden"><div class="code" style="left:57px;top:1px"><span class="c"># frozen_string_literal: true</span>

<span class="k">class</span> <span class="t">Organization::HandleLine</span>
  <span class="f">include</span> <span class="t">ActiveModel</span>::<span class="r">API</span>
  <span class="f">include</span> <span class="t">ActiveModel</span>::<span class="t">Validations</span>::<span class="t">Callbacks</span>
  <span class="f">include</span> <span class="t">ActiveModel</span>::<span class="t">Attributes</span>

  <span class="f">attr_accessor</span> <span class="s">:id</span>, <span class="s">:value</span>, <span class="s">:type</span>, <span class="s">:other_platform_label</span>

  attribute <span class="s">:_destroy</span>, <span class="s">:boolean</span>, <span class="s">default:</span> <span class="n">false</span>
  <span class="k">alias_method</span> <span class="s">:_destroy?</span>, <span class="s">:_destroy</span>

  validates <span class="s">:value</span>, <span class="s">presence:</span> <span class="n">true</span>
  validates <span class="s">:type</span>, <span class="s">presence:</span> <span class="n">true</span>
  validates_presence_of <span class="s">:other_platform_label</span>

  <span class="k">def</span> <span class="f">platform_data</span>
    <span class="k">return</span> <span class="t">Handle</span>::<span class="t">Platform</span>.detect(<span class="s">value:</span> value)
    <span class="k">return</span> <span class="t">Organization</span>::<span class="t">Handle</span>.match_platform(value)
  <span class="k">end</span>
<span class="k">end</span></div></div><div style="left:715px;top:215px;width:349px;height:15px;background:#f1f1f3"></div><div style="left:706.5px;top:66px;white-space:pre;width:40px;text-align:right;font-family:Liberation Mono,monospace;font-size:13px;line-height:15px;color:#8f9697;transform:scaleX(0.8974358974358975);transform-origin:100% 0;-webkit-text-stroke:0.15px">1</div><div style="left:706.5px;top:81px;white-space:pre;width:40px;text-align:right;font-family:Liberation Mono,monospace;font-size:13px;line-height:15px;color:#8f9697;transform:scaleX(0.8974358974358975);transform-origin:100% 0;-webkit-text-stroke:0.15px">2</div><div style="left:706.5px;top:96px;white-space:pre;width:40px;text-align:right;font-family:Liberation Mono,monospace;font-size:13px;line-height:15px;color:#8f9697;transform:scaleX(0.8974358974358975);transform-origin:100% 0;-webkit-text-stroke:0.15px">3</div><div style="left:706.5px;top:111px;white-space:pre;width:40px;text-align:right;font-family:Liberation Mono,monospace;font-size:13px;line-height:15px;color:#8f9697;transform:scaleX(0.8974358974358975);transform-origin:100% 0;-webkit-text-stroke:0.15px">4</div><div style="left:706.5px;top:126px;white-space:pre;width:40px;text-align:right;font-family:Liberation Mono,monospace;font-size:13px;line-height:15px;color:#8f9697;transform:scaleX(0.8974358974358975);transform-origin:100% 0;-webkit-text-stroke:0.15px">5</div><div style="left:706.5px;top:141px;white-space:pre;width:40px;text-align:right;font-family:Liberation Mono,monospace;font-size:13px;line-height:15px;color:#8f9697;transform:scaleX(0.8974358974358975);transform-origin:100% 0;-webkit-text-stroke:0.15px">6</div><div style="left:706.5px;top:156px;white-space:pre;width:40px;text-align:right;font-family:Liberation Mono,monospace;font-size:13px;line-height:15px;color:#8f9697;transform:scaleX(0.8974358974358975);transform-origin:100% 0;-webkit-text-stroke:0.15px">7</div><div style="left:706.5px;top:171px;white-space:pre;width:40px;text-align:right;font-family:Liberation Mono,monospace;font-size:13px;line-height:15px;color:#8f9697;transform:scaleX(0.8974358974358975);transform-origin:100% 0;-webkit-text-stroke:0.15px">8</div><div style="left:706.5px;top:186px;white-space:pre;width:40px;text-align:right;font-family:Liberation Mono,monospace;font-size:13px;line-height:15px;color:#8f9697;transform:scaleX(0.8974358974358975);transform-origin:100% 0;-webkit-text-stroke:0.15px">9</div><div style="left:706.5px;top:201px;white-space:pre;width:40px;text-align:right;font-family:Liberation Mono,monospace;font-size:13px;line-height:15px;color:#8f9697;transform:scaleX(0.8974358974358975);transform-origin:100% 0;-webkit-text-stroke:0.15px">10</div><div style="left:706.5px;top:216px;white-space:pre;width:40px;text-align:right;font-family:Liberation Mono,monospace;font-size:13px;line-height:15px;color:#2e2e2e;transform:scaleX(0.8974358974358975);transform-origin:100% 0;-webkit-text-stroke:0.15px">11</div><div style="left:706.5px;top:231px;white-space:pre;width:40px;text-align:right;font-family:Liberation Mono,monospace;font-size:13px;line-height:15px;color:#8f9697;transform:scaleX(0.8974358974358975);transform-origin:100% 0;-webkit-text-stroke:0.15px">12</div><div style="left:706.5px;top:246px;white-space:pre;width:40px;text-align:right;font-family:Liberation Mono,monospace;font-size:13px;line-height:15px;color:#8f9697;transform:scaleX(0.8974358974358975);transform-origin:100% 0;-webkit-text-stroke:0.15px">13</div><div style="left:706.5px;top:261px;white-space:pre;width:40px;text-align:right;font-family:Liberation Mono,monospace;font-size:13px;line-height:15px;color:#8f9697;transform:scaleX(0.8974358974358975);transform-origin:100% 0;-webkit-text-stroke:0.15px">14</div><div style="left:706.5px;top:276px;white-space:pre;width:40px;text-align:right;font-family:Liberation Mono,monospace;font-size:13px;line-height:15px;color:#8f9697;transform:scaleX(0.8974358974358975);transform-origin:100% 0;-webkit-text-stroke:0.15px">15</div><div style="left:706.5px;top:291px;white-space:pre;width:40px;text-align:right;font-family:Liberation Mono,monospace;font-size:13px;line-height:15px;color:#8f9697;transform:scaleX(0.8974358974358975);transform-origin:100% 0;-webkit-text-stroke:0.15px">16</div><div style="left:706.5px;top:306px;white-space:pre;width:40px;text-align:right;font-family:Liberation Mono,monospace;font-size:13px;line-height:15px;color:#8f9697;transform:scaleX(0.8974358974358975);transform-origin:100% 0;-webkit-text-stroke:0.15px">17</div><div style="left:706.5px;top:321px;white-space:pre;width:40px;text-align:right;font-family:Liberation Mono,monospace;font-size:13px;line-height:15px;color:#8f9697;transform:scaleX(0.8974358974358975);transform-origin:100% 0;-webkit-text-stroke:0.15px">18</div><div style="left:706.5px;top:336px;white-space:pre;width:40px;text-align:right;font-family:Liberation Mono,monospace;font-size:13px;line-height:15px;color:#8f9697;transform:scaleX(0.8974358974358975);transform-origin:100% 0;-webkit-text-stroke:0.15px">19</div><div style="left:706.5px;top:351px;white-space:pre;width:40px;text-align:right;font-family:Liberation Mono,monospace;font-size:13px;line-height:15px;color:#8f9697;transform:scaleX(0.8974358974358975);transform-origin:100% 0;-webkit-text-stroke:0.15px">20</div><div style="left:706.5px;top:366px;white-space:pre;width:40px;text-align:right;font-family:Liberation Mono,monospace;font-size:13px;line-height:15px;color:#8f9697;transform:scaleX(0.8974358974358975);transform-origin:100% 0;-webkit-text-stroke:0.15px">21</div><div style="left:706.5px;top:381px;white-space:pre;width:40px;text-align:right;font-family:Liberation Mono,monospace;font-size:13px;line-height:15px;color:#8f9697;transform:scaleX(0.8974358974358975);transform-origin:100% 0;-webkit-text-stroke:0.15px">22</div><div style="left:706.5px;top:396px;white-space:pre;width:40px;text-align:right;font-family:Liberation Mono,monospace;font-size:13px;line-height:15px;color:#8f9697;transform:scaleX(0.8974358974358975);transform-origin:100% 0;-webkit-text-stroke:0.15px">23</div><div style="left:706.5px;top:411px;white-space:pre;width:40px;text-align:right;font-family:Liberation Mono,monospace;font-size:13px;line-height:15px;color:#8f9697;transform:scaleX(0.8974358974358975);transform-origin:100% 0;-webkit-text-stroke:0.15px">24</div><div style="left:706.5px;top:426px;white-space:pre;width:40px;text-align:right;font-family:Liberation Mono,monospace;font-size:13px;line-height:15px;color:#8f9697;transform:scaleX(0.8974358974358975);transform-origin:100% 0;-webkit-text-stroke:0.15px">25</div><div style="left:706.5px;top:441px;white-space:pre;width:40px;text-align:right;font-family:Liberation Mono,monospace;font-size:13px;line-height:15px;color:#8f9697;transform:scaleX(0.8974358974358975);transform-origin:100% 0;-webkit-text-stroke:0.15px">26</div><div style="left:706.5px;top:456px;white-space:pre;width:40px;text-align:right;font-family:Liberation Mono,monospace;font-size:13px;line-height:15px;color:#8f9697;transform:scaleX(0.8974358974358975);transform-origin:100% 0;-webkit-text-stroke:0.15px">27</div><div style="left:706.5px;top:471px;white-space:pre;width:40px;text-align:right;font-family:Liberation Mono,monospace;font-size:13px;line-height:15px;color:#8f9697;transform:scaleX(0.8974358974358975);transform-origin:100% 0;-webkit-text-stroke:0.15px">28</div><div style="left:706.5px;top:486px;white-space:pre;width:40px;text-align:right;font-family:Liberation Mono,monospace;font-size:13px;line-height:15px;color:#8f9697;transform:scaleX(0.8974358974358975);transform-origin:100% 0;-webkit-text-stroke:0.15px">29</div><div style="left:706.5px;top:501px;white-space:pre;width:40px;text-align:right;font-family:Liberation Mono,monospace;font-size:13px;line-height:15px;color:#8f9697;transform:scaleX(0.8974358974358975);transform-origin:100% 0;-webkit-text-stroke:0.15px">30</div><div style="left:706.5px;top:516px;white-space:pre;width:40px;text-align:right;font-family:Liberation Mono,monospace;font-size:13px;line-height:15px;color:#8f9697;transform:scaleX(0.8974358974358975);transform-origin:100% 0;-webkit-text-stroke:0.15px">31</div><div style="left:706.5px;top:531px;white-space:pre;width:40px;text-align:right;font-family:Liberation Mono,monospace;font-size:13px;line-height:15px;color:#8f9697;transform:scaleX(0.8974358974358975);transform-origin:100% 0;-webkit-text-stroke:0.15px">32</div><div style="left:706.5px;top:546px;white-space:pre;width:40px;text-align:right;font-family:Liberation Mono,monospace;font-size:13px;line-height:15px;color:#8f9697;transform:scaleX(0.8974358974358975);transform-origin:100% 0;-webkit-text-stroke:0.15px">33</div><div style="left:706.5px;top:561px;white-space:pre;width:40px;text-align:right;font-family:Liberation Mono,monospace;font-size:13px;line-height:15px;color:#8f9697;transform:scaleX(0.8974358974358975);transform-origin:100% 0;-webkit-text-stroke:0.15px">34</div><div style="left:706.5px;top:576px;white-space:pre;width:40px;text-align:right;font-family:Liberation Mono,monospace;font-size:13px;line-height:15px;color:#8f9697;transform:scaleX(0.8974358974358975);transform-origin:100% 0;-webkit-text-stroke:0.15px">35</div><div style="left:706.5px;top:591px;white-space:pre;width:40px;text-align:right;font-family:Liberation Mono,monospace;font-size:13px;line-height:15px;color:#8f9697;transform:scaleX(0.8974358974358975);transform-origin:100% 0;-webkit-text-stroke:0.15px">36</div><div style="left:706.5px;top:606px;white-space:pre;width:40px;text-align:right;font-family:Liberation Mono,monospace;font-size:13px;line-height:15px;color:#8f9697;transform:scaleX(0.8974358974358975);transform-origin:100% 0;-webkit-text-stroke:0.15px">37</div><div style="left:706.5px;top:621px;white-space:pre;width:40px;text-align:right;font-family:Liberation Mono,monospace;font-size:13px;line-height:15px;color:#8f9697;transform:scaleX(0.8974358974358975);transform-origin:100% 0;-webkit-text-stroke:0.15px">38</div><div style="left:706.5px;top:636px;white-space:pre;width:40px;text-align:right;font-family:Liberation Mono,monospace;font-size:13px;line-height:15px;color:#8f9697;transform:scaleX(0.8974358974358975);transform-origin:100% 0;-webkit-text-stroke:0.15px">39</div><div style="left:706.5px;top:651px;white-space:pre;width:40px;text-align:right;font-family:Liberation Mono,monospace;font-size:13px;line-height:15px;color:#8f9697;transform:scaleX(0.8974358974358975);transform-origin:100% 0;-webkit-text-stroke:0.15px">40</div><div style="left:706.5px;top:666px;white-space:pre;width:40px;text-align:right;font-family:Liberation Mono,monospace;font-size:13px;line-height:15px;color:#8f9697;transform:scaleX(0.8974358974358975);transform-origin:100% 0;-webkit-text-stroke:0.15px">41</div><div style="left:706.5px;top:681px;white-space:pre;width:40px;text-align:right;font-family:Liberation Mono,monospace;font-size:13px;line-height:15px;color:#8f9697;transform:scaleX(0.8974358974358975);transform-origin:100% 0;-webkit-text-stroke:0.15px">42</div><div style="left:706.5px;top:696px;white-space:pre;width:40px;text-align:right;font-family:Liberation Mono,monospace;font-size:13px;line-height:15px;color:#8f9697;transform:scaleX(0.8974358974358975);transform-origin:100% 0;-webkit-text-stroke:0.15px">43</div><div style="left:706.5px;top:711px;white-space:pre;width:40px;text-align:right;font-family:Liberation Mono,monospace;font-size:13px;line-height:15px;color:#8f9697;transform:scaleX(0.8974358974358975);transform-origin:100% 0;-webkit-text-stroke:0.15px">44</div><div style="left:706.5px;top:726px;white-space:pre;width:40px;text-align:right;font-family:Liberation Mono,monospace;font-size:13px;line-height:15px;color:#8f9697;transform:scaleX(0.8974358974358975);transform-origin:100% 0;-webkit-text-stroke:0.15px">45</div><div style="left:706.5px;top:741px;white-space:pre;width:40px;text-align:right;font-family:Liberation Mono,monospace;font-size:13px;line-height:15px;color:#8f9697;transform:scaleX(0.8974358974358975);transform-origin:100% 0;-webkit-text-stroke:0.15px">46</div><div style="left:706.5px;top:756px;white-space:pre;width:40px;text-align:right;font-family:Liberation Mono,monospace;font-size:13px;line-height:15px;color:#8f9697;transform:scaleX(0.8974358974358975);transform-origin:100% 0;-webkit-text-stroke:0.15px">47</div><div style="left:706.5px;top:771px;white-space:pre;width:40px;text-align:right;font-family:Liberation Mono,monospace;font-size:13px;line-height:15px;color:#8f9697;transform:scaleX(0.8974358974358975);transform-origin:100% 0;-webkit-text-stroke:0.15px">48</div><div style="left:706.5px;top:786px;white-space:pre;width:40px;text-align:right;font-family:Liberation Mono,monospace;font-size:13px;line-height:15px;color:#8f9697;transform:scaleX(0.8974358974358975);transform-origin:100% 0;-webkit-text-stroke:0.15px">49</div><div style="left:706.5px;top:801px;white-space:pre;width:40px;text-align:right;font-family:Liberation Mono,monospace;font-size:13px;line-height:15px;color:#8f9697;transform:scaleX(0.8974358974358975);transform-origin:100% 0;-webkit-text-stroke:0.15px">50</div><div style="left:706.5px;top:816px;white-space:pre;width:40px;text-align:right;font-family:Liberation Mono,monospace;font-size:13px;line-height:15px;color:#8f9697;transform:scaleX(0.8974358974358975);transform-origin:100% 0;-webkit-text-stroke:0.15px">51</div><div style="left:706.5px;top:831px;white-space:pre;width:40px;text-align:right;font-family:Liberation Mono,monospace;font-size:13px;line-height:15px;color:#8f9697;transform:scaleX(0.8974358974358975);transform-origin:100% 0;-webkit-text-stroke:0.15px">52</div><div style="left:706.5px;top:846px;white-space:pre;width:40px;text-align:right;font-family:Liberation Mono,monospace;font-size:13px;line-height:15px;color:#8f9697;transform:scaleX(0.8974358974358975);transform-origin:100% 0;-webkit-text-stroke:0.15px">53</div><div style="left:706.5px;top:861px;white-space:pre;width:40px;text-align:right;font-family:Liberation Mono,monospace;font-size:13px;line-height:15px;color:#8f9697;transform:scaleX(0.8974358974358975);transform-origin:100% 0;-webkit-text-stroke:0.15px">54</div><div style="left:706.5px;top:876px;white-space:pre;width:40px;text-align:right;font-family:Liberation Mono,monospace;font-size:13px;line-height:15px;color:#8f9697;transform:scaleX(0.8974358974358975);transform-origin:100% 0;-webkit-text-stroke:0.15px">55</div><div style="left:706.5px;top:891px;white-space:pre;width:40px;text-align:right;font-family:Liberation Mono,monospace;font-size:13px;line-height:15px;color:#8f9697;transform:scaleX(0.8974358974358975);transform-origin:100% 0;-webkit-text-stroke:0.15px">56</div><div style="left:706.5px;top:906px;white-space:pre;width:40px;text-align:right;font-family:Liberation Mono,monospace;font-size:13px;line-height:15px;color:#8f9697;transform:scaleX(0.8974358974358975);transform-origin:100% 0;-webkit-text-stroke:0.15px">57</div><div style="left:706.5px;top:921px;white-space:pre;width:40px;text-align:right;font-family:Liberation Mono,monospace;font-size:13px;line-height:15px;color:#8f9697;transform:scaleX(0.8974358974358975);transform-origin:100% 0;-webkit-text-stroke:0.15px">58</div><div style="left:706.5px;top:936px;white-space:pre;width:40px;text-align:right;font-family:Liberation Mono,monospace;font-size:13px;line-height:15px;color:#8f9697;transform:scaleX(0.8974358974358975);transform-origin:100% 0;-webkit-text-stroke:0.15px">59</div><div style="left:706.5px;top:951px;white-space:pre;width:40px;text-align:right;font-family:Liberation Mono,monospace;font-size:13px;line-height:15px;color:#8f9697;transform:scaleX(0.8974358974358975);transform-origin:100% 0;-webkit-text-stroke:0.15px">60</div><div style="left:706.5px;top:966px;white-space:pre;width:40px;text-align:right;font-family:Liberation Mono,monospace;font-size:13px;line-height:15px;color:#8f9697;transform:scaleX(0.8974358974358975);transform-origin:100% 0;-webkit-text-stroke:0.15px">61</div><div style="left:706.5px;top:981px;white-space:pre;width:40px;text-align:right;font-family:Liberation Mono,monospace;font-size:13px;line-height:15px;color:#8f9697;transform:scaleX(0.8974358974358975);transform-origin:100% 0;-webkit-text-stroke:0.15px">62</div><div style="left:706.5px;top:996px;white-space:pre;width:40px;text-align:right;font-family:Liberation Mono,monospace;font-size:13px;line-height:15px;color:#8f9697;transform:scaleX(0.8974358974358975);transform-origin:100% 0;-webkit-text-stroke:0.15px">63</div><div style="left:706.5px;top:1011px;white-space:pre;width:40px;text-align:right;font-family:Liberation Mono,monospace;font-size:13px;line-height:15px;color:#8f9697;transform:scaleX(0.8974358974358975);transform-origin:100% 0;-webkit-text-stroke:0.15px">64</div><div class="fold" style="left:753px;top:114px;width:9px;height:8px;"></div><div class="fold" style="left:753px;top:189px;width:9px;height:8px;"></div><div class="fold" style="left:753px;top:309px;width:9px;height:8px;"></div><div class="fold" style="left:753px;top:324px;width:9px;height:8px;"></div><div class="fold" style="left:753px;top:399px;width:9px;height:8px;"></div><div class="fold" style="left:753px;top:534px;width:9px;height:8px;"></div><div class="fold" style="left:753px;top:669px;width:9px;height:8px;"></div><div class="fold" style="left:753px;top:729px;width:9px;height:8px;"></div><div class="fold" style="left:753px;top:804px;width:9px;height:8px;"></div><div class="fold" style="left:753px;top:864px;width:9px;height:8px;"></div><div class="fold" style="left:753px;top:924px;width:9px;height:8px;"></div><div class="fold" style="left:753px;top:984px;width:9px;height:8px;"></div><div style="left:771px;top:125px;width:1px;height:30px;border-left:1px dotted #c8c8c8"></div><div style="left:771px;top:200px;width:1px;height:75px;border-left:1px dotted #c8c8c8"></div><div style="left:771px;top:320px;width:1px;height:705px;border-left:1px dotted #c8c8c8"></div><div style="left:785px;top:335px;width:1px;height:30px;border-left:1px dotted #c8c8c8"></div><div style="left:785px;top:410px;width:1px;height:90px;border-left:1px dotted #c8c8c8"></div><div style="left:785px;top:545px;width:1px;height:225px;border-left:1px dotted #c8c8c8"></div><div style="left:799px;top:680px;width:1px;height:15px;border-left:1px dotted #c8c8c8"></div><div style="left:799px;top:740px;width:1px;height:15px;border-left:1px dotted #c8c8c8"></div><div style="left:785px;top:815px;width:1px;height:15px;border-left:1px dotted #c8c8c8"></div><div style="left:785px;top:875px;width:1px;height:15px;border-left:1px dotted #c8c8c8"></div><div style="left:785px;top:935px;width:1px;height:15px;border-left:1px dotted #c8c8c8"></div><div style="left:785px;top:995px;width:1px;height:15px;border-left:1px dotted #c8c8c8"></div><div style="left:715px;top:65px;width:349px;height:948px;overflow:hidden"><div class="code" style="left:57px;top:1px"><span class="k">import</span> { <span class="v">submitFormOnCommandEnter</span> } <span class="k">from</span> <span class="s">&#x27;../utils/submit&#x27;</span>
<span class="k">import</span> { <span class="v">windowFullyLoaded</span> } <span class="k">from</span> <span class="s">&#x27;../utils/window&#x27;</span>

<span class="k">async</span> <span class="k">function</span> <span class="f">updateCharacterCountOnChange</span>(event) {
  <span class="k">const</span> <span class="v">composeMicropostElement</span> = <span class="v">event</span>.target.closest()
  <span class="v">composeMicropostElement</span>?.<span class="f">updateCharacterCount</span>()
}

<span class="k">async</span> <span class="k">function</span> <span class="f">pasteClipboardFilesToTargetElement</span>(event) {
  <span class="k">if</span>(<span class="v">event</span>.clipboardData.files.length &lt;= <span class="n">0</span>) { return }
  <span class="k">const</span> <span class="u">composeMicropostElement</span> = <span class="v">event</span>.target.closest()
  <span class="u">composeMicropostElement</span>?.<span class="f">addFilesToTargetElement</span>(event)
  <span class="v">event</span>.<span class="f">stopImmediatePropagation</span>()
  <span class="v">event</span>.<span class="f">preventDefault</span>()
}

<span class="k">class</span> <span class="t">ComposeMicropostElement</span> <span class="k">extends</span> <span class="s">HTMLElement</span> {
  <span class="f">constructor</span>() {
    <span class="v">super</span>();
    <span class="v">this</span>.encoder = new <span class="v">TextEncoder</span>()
  }

  <span class="k">async</span> <span class="f">connectedCallback</span>() {
    <span class="k">if</span>(!<span class="v">this</span>.isConnected){ <span class="k">return</span> }
    <span class="k">await</span> <span class="f">windowFullyLoaded</span>()

    <span class="v">this</span>.textareaElement.<span class="f">addEventListener</span>(
    <span class="v">this</span>.textareaElement.<span class="f">addEventListener</span>(
    <span class="v">this</span>.textareaElement.<span class="f">addEventListener</span>(
  }

  <span class="f">updateCharacterCount</span>(){
    <span class="k">const</span> <span class="w">totatCount</span> = <span class="n">240</span>
    <span class="k">const</span> <span class="v">count</span> = <span class="v">this</span>.characterCount
    <span class="k">const</span> <span class="v">percentage</span> =  Math.<span class="m">min</span>(((<span class="v">count</span>/240)
    <span class="v">this</span>.characterCountElement.<span class="f">querySelector</span>(
    <span class="v">this</span>.characterCountElement.<span class="f">querySelector</span>(
    <span class="v">this</span>.characterCountElement.classList.<span class="f">remove</span>(
    <span class="v">this</span>.characterCountElement.classList.<span class="f">remove</span>(

    <span class="k">if</span>(<span class="v">count</span> &gt;= <span class="n">216</span> &amp;&amp; <span class="v">count</span> &lt; <span class="n">240</span>) {
      <span class="v">this</span>.characterCountElement.classList.add(
    }

    <span class="k">if</span>(<span class="v">count</span> &gt;= <span class="n">240</span>) {
      <span class="v">this</span>.characterCountElement.classList.add(
    }
  }

  <span class="f">addFilesToTargetElement</span>(files) {
    <span class="v">this</span>.uppyElementInForm?.uppy?.<span class="f">addFiles</span>(files)
  }

  <span class="k">get</span> <span class="f">textareaElement</span>(){
    <span class="k">return</span> <span class="v">this</span>.<span class="f">querySelector</span>(`<span class="s">textarea[data-role]`</span>)
  }

  <span class="k">get</span> <span class="f">value</span>(){
    <span class="k">return</span> <span class="v">this</span>.textareaElement.value
  }

  <span class="k">get</span> <span class="f">characterCount</span>(){
    <span class="k">return</span> <span class="v">this</span>.encoder.<span class="f">encode</span>(<span class="v">this</span>.value)
  }</div></div><div style="left:674px;top:65px;width:39px;height:128px;overflow:hidden"><svg width="39" height="128"><rect x="0" y="0" width="39" height="126" fill="#bfbbcf"/><rect x="0.00" y="0.25" width="0.95" height="1.3" fill="#b4a393" opacity="0.5"/><rect x="1.90" y="0.25" width="20.90" height="1.3" fill="#b4a393" opacity="0.5"/><rect x="23.75" y="0.25" width="3.80" height="1.3" fill="#b4a393" opacity="0.5"/><rect x="0.00" y="4.25" width="4.75" height="1.3" fill="#7b63a6" opacity="0.5"/><rect x="5.70" y="4.25" width="22.80" height="1.3" fill="#e97a55" opacity="0.5"/><rect x="1.90" y="6.25" width="6.65" height="1.3" fill="#3f91c2" opacity="0.5"/><rect x="9.50" y="6.25" width="10.45" height="1.3" fill="#e97a55" opacity="0.5"/><rect x="19.95" y="6.25" width="1.90" height="1.3" fill="#2e2e2e" opacity="0.5"/><rect x="21.85" y="6.25" width="2.85" height="1.3" fill="#8e2426" opacity="0.5"/><rect x="1.90" y="8.25" width="6.65" height="1.3" fill="#3f91c2" opacity="0.5"/><rect x="9.50" y="8.25" width="10.45" height="1.3" fill="#e97a55" opacity="0.5"/><rect x="19.95" y="8.25" width="1.90" height="1.3" fill="#2e2e2e" opacity="0.5"/><rect x="21.85" y="8.25" width="10.45" height="1.3" fill="#e97a55" opacity="0.5"/><rect x="32.30" y="8.25" width="1.90" height="1.3" fill="#2e2e2e" opacity="0.5"/><rect x="34.20" y="8.25" width="8.55" height="1.3" fill="#e97a55" opacity="0.5"/><rect x="1.90" y="10.25" width="6.65" height="1.3" fill="#3f91c2" opacity="0.5"/><rect x="9.50" y="10.25" width="10.45" height="1.3" fill="#e97a55" opacity="0.5"/><rect x="19.95" y="10.25" width="1.90" height="1.3" fill="#2e2e2e" opacity="0.5"/><rect x="21.85" y="10.25" width="9.50" height="1.3" fill="#e97a55" opacity="0.5"/><rect x="1.90" y="14.25" width="12.35" height="1.3" fill="#3f91c2" opacity="0.5"/><rect x="15.20" y="14.25" width="2.85" height="1.3" fill="#4f8c4c" opacity="0.5"/><rect x="18.05" y="14.25" width="0.95" height="1.3" fill="#2e2e2e" opacity="0.5"/><rect x="19.95" y="14.25" width="5.70" height="1.3" fill="#4f8c4c" opacity="0.5"/><rect x="25.65" y="14.25" width="0.95" height="1.3" fill="#2e2e2e" opacity="0.5"/><rect x="27.55" y="14.25" width="4.75" height="1.3" fill="#4f8c4c" opacity="0.5"/><rect x="32.30" y="14.25" width="0.95" height="1.3" fill="#2e2e2e" opacity="0.5"/><rect x="34.20" y="14.25" width="19.95" height="1.3" fill="#4f8c4c" opacity="0.5"/><rect x="1.90" y="18.25" width="8.55" height="1.3" fill="#2e2e2e" opacity="0.5"/><rect x="11.40" y="18.25" width="8.55" height="1.3" fill="#4f8c4c" opacity="0.5"/><rect x="19.95" y="18.25" width="0.95" height="1.3" fill="#2e2e2e" opacity="0.5"/><rect x="21.85" y="18.25" width="7.60" height="1.3" fill="#4f8c4c" opacity="0.5"/><rect x="29.45" y="18.25" width="0.95" height="1.3" fill="#2e2e2e" opacity="0.5"/><rect x="31.35" y="18.25" width="7.60" height="1.3" fill="#4f8c4c" opacity="0.5"/><rect x="1.90" y="20.25" width="11.40" height="1.3" fill="#7b63a6" opacity="0.5"/><rect x="14.25" y="20.25" width="9.50" height="1.3" fill="#4f8c4c" opacity="0.5"/><rect x="23.75" y="20.25" width="0.95" height="1.3" fill="#2e2e2e" opacity="0.5"/><rect x="25.65" y="20.25" width="8.55" height="1.3" fill="#4f8c4c" opacity="0.5"/><rect x="1.90" y="24.25" width="8.55" height="1.3" fill="#2e2e2e" opacity="0.5"/><rect x="11.40" y="24.25" width="5.70" height="1.3" fill="#4f8c4c" opacity="0.5"/><rect x="17.10" y="24.25" width="0.95" height="1.3" fill="#2e2e2e" opacity="0.5"/><rect x="19.00" y="24.25" width="8.55" height="1.3" fill="#4f8c4c" opacity="0.5"/><rect x="28.50" y="24.25" width="3.80" height="1.3" fill="#b2603a" opacity="0.5"/><rect x="1.90" y="26.25" width="8.55" height="1.3" fill="#2e2e2e" opacity="0.5"/><rect x="11.40" y="26.25" width="4.75" height="1.3" fill="#4f8c4c" opacity="0.5"/><rect x="16.15" y="26.25" width="0.95" height="1.3" fill="#2e2e2e" opacity="0.5"/><rect x="18.05" y="26.25" width="8.55" height="1.3" fill="#4f8c4c" opacity="0.5"/><rect x="27.55" y="26.25" width="3.80" height="1.3" fill="#b2603a" opacity="0.5"/><rect x="1.90" y="28.25" width="19.95" height="1.3" fill="#2e2e2e" opacity="0.5"/><rect x="22.80" y="28.25" width="19.95" height="1.3" fill="#4f8c4c" opacity="0.5"/><rect x="1.90" y="32.25" width="2.85" height="1.3" fill="#7b63a6" opacity="0.5"/><rect x="5.70" y="32.25" width="12.35" height="1.3" fill="#3f91c2" opacity="0.5"/><rect x="3.80" y="34.25" width="5.70" height="1.3" fill="#7b63a6" opacity="0.5"/><rect x="10.45" y="34.25" width="5.70" height="1.3" fill="#e97a55" opacity="0.5"/><rect x="16.15" y="34.25" width="1.90" height="1.3" fill="#2e2e2e" opacity="0.5"/><rect x="18.05" y="34.25" width="7.60" height="1.3" fill="#e97a55" opacity="0.5"/><rect x="25.65" y="34.25" width="7.60" height="1.3" fill="#2e2e2e" opacity="0.5"/><rect x="33.25" y="34.25" width="5.70" height="1.3" fill="#4f8c4c" opacity="0.5"/><rect x="3.80" y="36.25" width="5.70" height="1.3" fill="#7b63a6" opacity="0.5"/><rect x="10.45" y="36.25" width="11.40" height="1.3" fill="#e97a55" opacity="0.5"/><rect x="21.85" y="36.25" width="1.90" height="1.3" fill="#2e2e2e" opacity="0.5"/><rect x="23.75" y="36.25" width="5.70" height="1.3" fill="#e97a55" opacity="0.5"/><rect x="29.45" y="36.25" width="20.90" height="1.3" fill="#2e2e2e" opacity="0.5"/><rect x="1.90" y="38.25" width="2.85" height="1.3" fill="#7b63a6" opacity="0.5"/><rect x="0.00" y="40.25" width="2.85" height="1.3" fill="#7b63a6" opacity="0.5"/></svg></div><div style="left:1064px;top:65px;width:38px;height:164px;overflow:hidden"><svg width="38" height="164"><rect x="0" y="0" width="38" height="126" fill="#bfbbcf"/><rect x="12" y="20" width="22" height="2" fill="#d6a040" opacity="0.8"/><rect x="2" y="22" width="22" height="2" fill="#d6a040" opacity="0.8"/><rect x="0.00" y="0.25" width="5.70" height="1.3" fill="#7b63a6" opacity="0.5"/><rect x="6.65" y="0.25" width="0.95" height="1.3" fill="#2e2e2e" opacity="0.5"/><rect x="8.55" y="0.25" width="22.80" height="1.3" fill="#9a2e2f" opacity="0.5"/><rect x="32.30" y="0.25" width="0.95" height="1.3" fill="#2e2e2e" opacity="0.5"/><rect x="34.20" y="0.25" width="3.80" height="1.3" fill="#7b63a6" opacity="0.5"/><rect x="0.00" y="2.25" width="5.70" height="1.3" fill="#7b63a6" opacity="0.5"/><rect x="6.65" y="2.25" width="0.95" height="1.3" fill="#2e2e2e" opacity="0.5"/><rect x="8.55" y="2.25" width="16.15" height="1.3" fill="#9a2e2f" opacity="0.5"/><rect x="25.65" y="2.25" width="0.95" height="1.3" fill="#2e2e2e" opacity="0.5"/><rect x="27.55" y="2.25" width="3.80" height="1.3" fill="#7b63a6" opacity="0.5"/><rect x="32.30" y="2.25" width="16.15" height="1.3" fill="#4f8c4c" opacity="0.5"/><rect x="0.00" y="6.25" width="4.75" height="1.3" fill="#7b63a6" opacity="0.5"/><rect x="5.70" y="6.25" width="7.60" height="1.3" fill="#7b63a6" opacity="0.5"/><rect x="14.25" y="6.25" width="26.60" height="1.3" fill="#3f91c2" opacity="0.5"/><rect x="1.90" y="8.25" width="4.75" height="1.3" fill="#7b63a6" opacity="0.5"/><rect x="7.60" y="8.25" width="21.85" height="1.3" fill="#9a2e2f" opacity="0.5"/><rect x="30.40" y="8.25" width="0.95" height="1.3" fill="#2e2e2e" opacity="0.5"/><rect x="32.30" y="8.25" width="4.75" height="1.3" fill="#9a2e2f" opacity="0.5"/><rect x="37.05" y="8.25" width="16.15" height="1.3" fill="#2e2e2e" opacity="0.5"/><rect x="1.90" y="10.25" width="21.85" height="1.3" fill="#9a2e2f" opacity="0.5"/><rect x="23.75" y="10.25" width="1.90" height="1.3" fill="#2e2e2e" opacity="0.5"/><rect x="25.65" y="10.25" width="19.00" height="1.3" fill="#3f91c2" opacity="0.5"/><rect x="0.00" y="12.25" width="0.95" height="1.3" fill="#2e2e2e" opacity="0.5"/><rect x="0.00" y="16.25" width="4.75" height="1.3" fill="#7b63a6" opacity="0.5"/><rect x="5.70" y="16.25" width="7.60" height="1.3" fill="#7b63a6" opacity="0.5"/><rect x="14.25" y="16.25" width="32.30" height="1.3" fill="#3f91c2" opacity="0.5"/><rect x="1.90" y="18.25" width="1.90" height="1.3" fill="#7b63a6" opacity="0.5"/><rect x="3.80" y="18.25" width="0.95" height="1.3" fill="#2e2e2e" opacity="0.5"/><rect x="4.75" y="18.25" width="4.75" height="1.3" fill="#9a2e2f" opacity="0.5"/><rect x="9.50" y="18.25" width="25.65" height="1.3" fill="#2e2e2e" opacity="0.5"/><rect x="36.10" y="18.25" width="1.90" height="1.3" fill="#2e2e2e" opacity="0.5"/><rect x="1.90" y="20.25" width="4.75" height="1.3" fill="#7b63a6" opacity="0.5"/><rect x="7.60" y="20.25" width="21.85" height="1.3" fill="#9a2e2f" opacity="0.5"/><rect x="30.40" y="20.25" width="0.95" height="1.3" fill="#2e2e2e" opacity="0.5"/><rect x="32.30" y="20.25" width="4.75" height="1.3" fill="#9a2e2f" opacity="0.5"/><rect x="37.05" y="20.25" width="16.15" height="1.3" fill="#2e2e2e" opacity="0.5"/><rect x="1.90" y="22.25" width="21.85" height="1.3" fill="#9a2e2f" opacity="0.5"/><rect x="23.75" y="22.25" width="1.90" height="1.3" fill="#2e2e2e" opacity="0.5"/><rect x="25.65" y="22.25" width="21.85" height="1.3" fill="#3f91c2" opacity="0.5"/><rect x="1.90" y="24.25" width="4.75" height="1.3" fill="#9a2e2f" opacity="0.5"/><rect x="6.65" y="24.25" width="0.95" height="1.3" fill="#2e2e2e" opacity="0.5"/><rect x="7.60" y="24.25" width="22.80" height="1.3" fill="#3f91c2" opacity="0.5"/><rect x="30.40" y="24.25" width="1.90" height="1.3" fill="#2e2e2e" opacity="0.5"/><rect x="1.90" y="26.25" width="4.75" height="1.3" fill="#9a2e2f" opacity="0.5"/><rect x="6.65" y="26.25" width="0.95" height="1.3" fill="#2e2e2e" opacity="0.5"/><rect x="7.60" y="26.25" width="13.30" height="1.3" fill="#3f91c2" opacity="0.5"/><rect x="20.90" y="26.25" width="1.90" height="1.3" fill="#2e2e2e" opacity="0.5"/><rect x="0.00" y="28.25" width="0.95" height="1.3" fill="#2e2e2e" opacity="0.5"/><rect x="0.00" y="32.25" width="4.75" height="1.3" fill="#7b63a6" opacity="0.5"/><rect x="5.70" y="32.25" width="21.85" height="1.3" fill="#e97a55" opacity="0.5"/><rect x="28.50" y="32.25" width="6.65" height="1.3" fill="#7b63a6" opacity="0.5"/><rect x="36.10" y="32.25" width="10.45" height="1.3" fill="#4f8c4c" opacity="0.5"/><rect x="1.90" y="34.25" width="10.45" height="1.3" fill="#3f91c2" opacity="0.5"/><rect x="12.35" y="34.25" width="1.90" height="1.3" fill="#2e2e2e" opacity="0.5"/><rect x="15.20" y="34.25" width="0.95" height="1.3" fill="#2e2e2e" opacity="0.5"/><rect x="3.80" y="36.25" width="4.75" height="1.3" fill="#9a2e2f" opacity="0.5"/><rect x="8.55" y="36.25" width="2.85" height="1.3" fill="#2e2e2e" opacity="0.5"/><rect x="3.80" y="38.25" width="3.80" height="1.3" fill="#9a2e2f" opacity="0.5"/><rect x="7.60" y="38.25" width="7.60" height="1.3" fill="#2e2e2e" opacity="0.5"/><rect x="16.15" y="38.25" width="0.95" height="1.3" fill="#2e2e2e" opacity="0.5"/><rect x="18.05" y="38.25" width="2.85" height="1.3" fill="#2e2e2e" opacity="0.5"/><rect x="21.85" y="38.25" width="10.45" height="1.3" fill="#9a2e2f" opacity="0.5"/><rect x="32.30" y="38.25" width="1.90" height="1.3" fill="#2e2e2e" opacity="0.5"/><rect x="1.90" y="40.25" width="0.95" height="1.3" fill="#2e2e2e" opacity="0.5"/><rect x="1.90" y="44.25" width="4.75" height="1.3" fill="#7b63a6" opacity="0.5"/><rect x="7.60" y="44.25" width="16.15" height="1.3" fill="#3f91c2" opacity="0.5"/><rect x="23.75" y="44.25" width="1.90" height="1.3" fill="#2e2e2e" opacity="0.5"/><rect x="26.60" y="44.25" width="0.95" height="1.3" fill="#2e2e2e" opacity="0.5"/><rect x="3.80" y="46.25" width="1.90" height="1.3" fill="#7b63a6" opacity="0.5"/><rect x="5.70" y="46.25" width="1.90" height="1.3" fill="#2e2e2e" opacity="0.5"/><rect x="7.60" y="46.25" width="3.80" height="1.3" fill="#9a2e2f" opacity="0.5"/><rect x="11.40" y="46.25" width="13.30" height="1.3" fill="#2e2e2e" opacity="0.5"/><rect x="25.65" y="46.25" width="5.70" height="1.3" fill="#7b63a6" opacity="0.5"/><rect x="32.30" y="46.25" width="0.95" height="1.3" fill="#2e2e2e" opacity="0.5"/><rect x="3.80" y="48.25" width="4.75" height="1.3" fill="#7b63a6" opacity="0.5"/><rect x="9.50" y="48.25" width="16.15" height="1.3" fill="#3f91c2" opacity="0.5"/><rect x="25.65" y="48.25" width="1.90" height="1.3" fill="#2e2e2e" opacity="0.5"/><rect x="3.80" y="52.25" width="3.80" height="1.3" fill="#9a2e2f" opacity="0.5"/><rect x="7.60" y="52.25" width="16.15" height="1.3" fill="#2e2e2e" opacity="0.5"/><rect x="23.75" y="52.25" width="15.20" height="1.3" fill="#3f91c2" opacity="0.5"/><rect x="3.80" y="54.25" width="3.80" height="1.3" fill="#9a2e2f" opacity="0.5"/><rect x="7.60" y="54.25" width="16.15" height="1.3" fill="#2e2e2e" opacity="0.5"/><rect x="23.75" y="54.25" width="15.20" height="1.3" fill="#3f91c2" opacity="0.5"/><rect x="3.80" y="56.25" width="3.80" height="1.3" fill="#9a2e2f" opacity="0.5"/><rect x="7.60" y="56.25" width="16.15" height="1.3" fill="#2e2e2e" opacity="0.5"/><rect x="23.75" y="56.25" width="15.20" height="1.3" fill="#3f91c2" opacity="0.5"/><rect x="1.90" y="58.25" width="0.95" height="1.3" fill="#2e2e2e" opacity="0.5"/><rect x="1.90" y="62.25" width="19.00" height="1.3" fill="#3f91c2" opacity="0.5"/><rect x="20.90" y="62.25" width="2.85" height="1.3" fill="#2e2e2e" opacity="0.5"/><rect x="3.80" y="64.25" width="4.75" height="1.3" fill="#7b63a6" opacity="0.5"/><rect x="9.50" y="64.25" width="9.50" height="1.3" fill="#9a2e2f" opacity="0.5"/><rect x="19.95" y="64.25" width="0.95" height="1.3" fill="#2e2e2e" opacity="0.5"/><rect x="21.85" y="64.25" width="2.85" height="1.3" fill="#b2603a" opacity="0.5"/><rect x="3.80" y="66.25" width="4.75" height="1.3" fill="#7b63a6" opacity="0.5"/><rect x="9.50" y="66.25" width="4.75" height="1.3" fill="#9a2e2f" opacity="0.5"/><rect x="15.20" y="66.25" width="0.95" height="1.3" fill="#2e2e2e" opacity="0.5"/><rect x="17.10" y="66.25" width="3.80" height="1.3" fill="#9a2e2f" opacity="0.5"/><rect x="20.90" y="66.25" width="14.25" height="1.3" fill="#2e2e2e" opacity="0.5"/><rect x="3.80" y="68.25" width="4.75" height="1.3" fill="#7b63a6" opacity="0.5"/><rect x="9.50" y="68.25" width="9.50" height="1.3" fill="#9a2e2f" opacity="0.5"/><rect x="19.95" y="68.25" width="0.95" height="1.3" fill="#2e2e2e" opacity="0.5"/><rect x="22.80" y="68.25" width="4.75" height="1.3" fill="#2e2e2e" opacity="0.5"/><rect x="27.55" y="68.25" width="2.85" height="1.3" fill="#3a9f92" opacity="0.5"/><rect x="30.40" y="68.25" width="2.85" height="1.3" fill="#2e2e2e" opacity="0.5"/><rect x="33.25" y="68.25" width="4.75" height="1.3" fill="#9a2e2f" opacity="0.5"/><rect x="3.80" y="70.25" width="3.80" height="1.3" fill="#9a2e2f" opacity="0.5"/><rect x="7.60" y="70.25" width="21.85" height="1.3" fill="#2e2e2e" opacity="0.5"/><rect x="29.45" y="70.25" width="12.35" height="1.3" fill="#3f91c2" opacity="0.5"/><rect x="3.80" y="72.25" width="3.80" height="1.3" fill="#9a2e2f" opacity="0.5"/><rect x="7.60" y="72.25" width="21.85" height="1.3" fill="#2e2e2e" opacity="0.5"/><rect x="29.45" y="72.25" width="12.35" height="1.3" fill="#3f91c2" opacity="0.5"/><rect x="3.80" y="74.25" width="3.80" height="1.3" fill="#9a2e2f" opacity="0.5"/><rect x="7.60" y="74.25" width="31.35" height="1.3" fill="#2e2e2e" opacity="0.5"/><rect x="3.80" y="76.25" width="3.80" height="1.3" fill="#9a2e2f" opacity="0.5"/><rect x="7.60" y="76.25" width="31.35" height="1.3" fill="#2e2e2e" opacity="0.5"/><rect x="3.80" y="80.25" width="1.90" height="1.3" fill="#7b63a6" opacity="0.5"/><rect x="5.70" y="80.25" width="0.95" height="1.3" fill="#2e2e2e" opacity="0.5"/><rect x="6.65" y="80.25" width="4.75" height="1.3" fill="#9a2e2f" opacity="0.5"/><rect x="12.35" y="80.25" width="1.90" height="1.3" fill="#2e2e2e" opacity="0.5"/><rect x="15.20" y="80.25" width="2.85" height="1.3" fill="#b2603a" opacity="0.5"/><rect x="19.00" y="80.25" width="1.90" height="1.3" fill="#2e2e2e" opacity="0.5"/><rect x="21.85" y="80.25" width="4.75" height="1.3" fill="#9a2e2f" opacity="0.5"/><rect x="27.55" y="80.25" width="0.95" height="1.3" fill="#2e2e2e" opacity="0.5"/><rect x="29.45" y="80.25" width="2.85" height="1.3" fill="#b2603a" opacity="0.5"/><rect x="32.30" y="80.25" width="0.95" height="1.3" fill="#2e2e2e" opacity="0.5"/><rect x="34.20" y="80.25" width="0.95" height="1.3" fill="#2e2e2e" opacity="0.5"/><rect x="5.70" y="82.25" width="3.80" height="1.3" fill="#9a2e2f" opacity="0.5"/><rect x="9.50" y="82.25" width="35.15" height="1.3" fill="#2e2e2e" opacity="0.5"/><rect x="3.80" y="84.25" width="0.95" height="1.3" fill="#2e2e2e" opacity="0.5"/><rect x="3.80" y="88.25" width="1.90" height="1.3" fill="#7b63a6" opacity="0.5"/><rect x="5.70" y="88.25" width="0.95" height="1.3" fill="#2e2e2e" opacity="0.5"/><rect x="6.65" y="88.25" width="4.75" height="1.3" fill="#9a2e2f" opacity="0.5"/><rect x="12.35" y="88.25" width="1.90" height="1.3" fill="#2e2e2e" opacity="0.5"/><rect x="15.20" y="88.25" width="2.85" height="1.3" fill="#b2603a" opacity="0.5"/><rect x="18.05" y="88.25" width="0.95" height="1.3" fill="#2e2e2e" opacity="0.5"/><rect x="19.95" y="88.25" width="0.95" height="1.3" fill="#2e2e2e" opacity="0.5"/><rect x="5.70" y="90.25" width="3.80" height="1.3" fill="#9a2e2f" opacity="0.5"/><rect x="9.50" y="90.25" width="35.15" height="1.3" fill="#2e2e2e" opacity="0.5"/><rect x="3.80" y="92.25" width="0.95" height="1.3" fill="#2e2e2e" opacity="0.5"/><rect x="1.90" y="94.25" width="0.95" height="1.3" fill="#2e2e2e" opacity="0.5"/><rect x="1.90" y="98.25" width="21.85" height="1.3" fill="#3f91c2" opacity="0.5"/><rect x="23.75" y="98.25" width="6.65" height="1.3" fill="#2e2e2e" opacity="0.5"/><rect x="31.35" y="98.25" width="0.95" height="1.3" fill="#2e2e2e" opacity="0.5"/><rect x="3.80" y="100.25" width="3.80" height="1.3" fill="#9a2e2f" opacity="0.5"/><rect x="7.60" y="100.25" width="24.70" height="1.3" fill="#2e2e2e" opacity="0.5"/><rect x="32.30" y="100.25" width="7.60" height="1.3" fill="#3f91c2" opacity="0.5"/><rect x="1.90" y="102.25" width="0.95" height="1.3" fill="#2e2e2e" opacity="0.5"/><rect x="1.90" y="106.25" width="2.85" height="1.3" fill="#7b63a6" opacity="0.5"/><rect x="5.70" y="106.25" width="14.25" height="1.3" fill="#3f91c2" opacity="0.5"/><rect x="19.95" y="106.25" width="2.85" height="1.3" fill="#2e2e2e" opacity="0.5"/><rect x="3.80" y="108.25" width="5.70" height="1.3" fill="#7b63a6" opacity="0.5"/><rect x="10.45" y="108.25" width="3.80" height="1.3" fill="#9a2e2f" opacity="0.5"/><rect x="14.25" y="108.25" width="0.95" height="1.3" fill="#2e2e2e" opacity="0.5"/><rect x="15.20" y="108.25" width="12.35" height="1.3" fill="#3f91c2" opacity="0.5"/><rect x="27.55" y="108.25" width="1.90" height="1.3" fill="#2e2e2e" opacity="0.5"/><rect x="29.45" y="108.25" width="19.00" height="1.3" fill="#4f8c4c" opacity="0.5"/><rect x="1.90" y="110.25" width="0.95" height="1.3" fill="#2e2e2e" opacity="0.5"/><rect x="1.90" y="114.25" width="2.85" height="1.3" fill="#7b63a6" opacity="0.5"/><rect x="5.70" y="114.25" width="4.75" height="1.3" fill="#3f91c2" opacity="0.5"/><rect x="10.45" y="114.25" width="2.85" height="1.3" fill="#2e2e2e" opacity="0.5"/><rect x="3.80" y="116.25" width="5.70" height="1.3" fill="#7b63a6" opacity="0.5"/><rect x="10.45" y="116.25" width="3.80" height="1.3" fill="#9a2e2f" opacity="0.5"/><rect x="14.25" y="116.25" width="20.90" height="1.3" fill="#2e2e2e" opacity="0.5"/><rect x="1.90" y="118.25" width="0.95" height="1.3" fill="#2e2e2e" opacity="0.5"/><rect x="1.90" y="122.25" width="2.85" height="1.3" fill="#7b63a6" opacity="0.5"/><rect x="5.70" y="122.25" width="13.30" height="1.3" fill="#3f91c2" opacity="0.5"/><rect x="19.00" y="122.25" width="2.85" height="1.3" fill="#2e2e2e" opacity="0.5"/><rect x="3.80" y="124.25" width="5.70" height="1.3" fill="#7b63a6" opacity="0.5"/><rect x="10.45" y="124.25" width="3.80" height="1.3" fill="#9a2e2f" opacity="0.5"/><rect x="14.25" y="124.25" width="8.55" height="1.3" fill="#2e2e2e" opacity="0.5"/><rect x="22.80" y="124.25" width="5.70" height="1.3" fill="#3f91c2" opacity="0.5"/><rect x="28.50" y="124.25" width="0.95" height="1.3" fill="#2e2e2e" opacity="0.5"/><rect x="29.45" y="124.25" width="3.80" height="1.3" fill="#9a2e2f" opacity="0.5"/><rect x="33.25" y="124.25" width="6.65" height="1.3" fill="#2e2e2e" opacity="0.5"/><rect x="1.90" y="126.25" width="0.95" height="1.3" fill="#2e2e2e" opacity="0.4"/><rect x="1.90" y="130.25" width="2.85" height="1.3" fill="#7b63a6" opacity="0.4"/><rect x="5.70" y="130.25" width="19.95" height="1.3" fill="#3f91c2" opacity="0.4"/><rect x="25.65" y="130.25" width="2.85" height="1.3" fill="#2e2e2e" opacity="0.4"/><rect x="3.80" y="132.25" width="5.70" height="1.3" fill="#7b63a6" opacity="0.4"/><rect x="10.45" y="132.25" width="3.80" height="1.3" fill="#9a2e2f" opacity="0.4"/><rect x="14.25" y="132.25" width="0.95" height="1.3" fill="#2e2e2e" opacity="0.4"/><rect x="15.20" y="132.25" width="12.35" height="1.3" fill="#3f91c2" opacity="0.4"/><rect x="27.55" y="132.25" width="1.90" height="1.3" fill="#2e2e2e" opacity="0.4"/><rect x="29.45" y="132.25" width="19.00" height="1.3" fill="#4f8c4c" opacity="0.4"/><rect x="1.90" y="134.25" width="0.95" height="1.3" fill="#2e2e2e" opacity="0.4"/><rect x="1.90" y="138.25" width="2.85" height="1.3" fill="#7b63a6" opacity="0.4"/><rect x="5.70" y="138.25" width="10.45" height="1.3" fill="#3f91c2" opacity="0.4"/><rect x="16.15" y="138.25" width="2.85" height="1.3" fill="#2e2e2e" opacity="0.4"/><rect x="3.80" y="140.25" width="5.70" height="1.3" fill="#7b63a6" opacity="0.4"/><rect x="10.45" y="140.25" width="8.55" height="1.3" fill="#2e2e2e" opacity="0.4"/><rect x="19.00" y="140.25" width="13.30" height="1.3" fill="#3f91c2" opacity="0.4"/><rect x="32.30" y="140.25" width="1.90" height="1.3" fill="#2e2e2e" opacity="0.4"/><rect x="34.20" y="140.25" width="15.20" height="1.3" fill="#4f8c4c" opacity="0.4"/><rect x="1.90" y="142.25" width="0.95" height="1.3" fill="#2e2e2e" opacity="0.4"/><rect x="1.90" y="146.25" width="2.85" height="1.3" fill="#7b63a6" opacity="0.4"/><rect x="5.70" y="146.25" width="16.15" height="1.3" fill="#3f91c2" opacity="0.4"/><rect x="21.85" y="146.25" width="2.85" height="1.3" fill="#2e2e2e" opacity="0.4"/><rect x="3.80" y="148.25" width="5.70" height="1.3" fill="#7b63a6" opacity="0.4"/><rect x="10.45" y="148.25" width="3.80" height="1.3" fill="#9a2e2f" opacity="0.4"/><rect x="14.25" y="148.25" width="0.95" height="1.3" fill="#2e2e2e" opacity="0.4"/><rect x="15.20" y="148.25" width="6.65" height="1.3" fill="#3f91c2" opacity="0.4"/><rect x="21.85" y="148.25" width="0.95" height="1.3" fill="#2e2e2e" opacity="0.4"/><rect x="22.80" y="148.25" width="5.70" height="1.3" fill="#4f8c4c" opacity="0.4"/><rect x="28.50" y="148.25" width="2.85" height="1.3" fill="#2e2e2e" opacity="0.4"/><rect x="31.35" y="148.25" width="12.35" height="1.3" fill="#3f91c2" opacity="0.4"/><rect x="1.90" y="150.25" width="0.95" height="1.3" fill="#2e2e2e" opacity="0.4"/><rect x="0.00" y="152.25" width="0.95" height="1.3" fill="#2e2e2e" opacity="0.4"/><rect x="0.00" y="156.25" width="14.25" height="1.3" fill="#2e2e2e" opacity="0.4"/><rect x="14.25" y="156.25" width="5.70" height="1.3" fill="#3f91c2" opacity="0.4"/><rect x="19.95" y="156.25" width="0.95" height="1.3" fill="#2e2e2e" opacity="0.4"/><rect x="20.90" y="156.25" width="25.65" height="1.3" fill="#4f8c4c" opacity="0.4"/><rect x="0.00" y="158.25" width="8.55" height="1.3" fill="#2e2e2e" opacity="0.4"/><rect x="8.55" y="158.25" width="15.20" height="1.3" fill="#3f91c2" opacity="0.4"/><rect x="23.75" y="158.25" width="0.95" height="1.3" fill="#2e2e2e" opacity="0.4"/><rect x="24.70" y="158.25" width="6.65" height="1.3" fill="#4f8c4c" opacity="0.4"/><rect x="31.35" y="158.25" width="0.95" height="1.3" fill="#2e2e2e" opacity="0.4"/><rect x="33.25" y="158.25" width="26.60" height="1.3" fill="#9a2e2f" opacity="0.4"/><rect x="0.00" y="160.25" width="8.55" height="1.3" fill="#2e2e2e" opacity="0.4"/><rect x="8.55" y="160.25" width="15.20" height="1.3" fill="#3f91c2" opacity="0.4"/><rect x="23.75" y="160.25" width="0.95" height="1.3" fill="#2e2e2e" opacity="0.4"/><rect x="24.70" y="160.25" width="6.65" height="1.3" fill="#4f8c4c" opacity="0.4"/><rect x="31.35" y="160.25" width="0.95" height="1.3" fill="#2e2e2e" opacity="0.4"/><rect x="33.25" y="160.25" width="32.30" height="1.3" fill="#9a2e2f" opacity="0.4"/></svg></div><div style="left:1465px;top:65px;width:40px;height:128px;overflow:hidden"><svg width="40" height="128"><rect x="0" y="0" width="40" height="126" fill="#bfbbcf"/><rect x="0.00" y="0.25" width="44.65" height="1.3" fill="#5b5d6e" opacity="0.6"/><rect x="0.00" y="2.25" width="46.55" height="1.3" fill="#5b5d6e" opacity="0.6"/><rect x="0.00" y="4.25" width="13.30" height="1.3" fill="#5b5d6e" opacity="0.6"/><rect x="0.00" y="6.25" width="29.45" height="1.3" fill="#5b5d6e" opacity="0.6"/><rect x="0.00" y="8.25" width="47.50" height="1.3" fill="#5b5d6e" opacity="0.6"/><rect x="0.00" y="10.25" width="0.95" height="1.3" fill="#5b5d6e" opacity="0.6"/><rect x="0.00" y="12.25" width="47.50" height="1.3" fill="#5b5d6e" opacity="0.6"/><rect x="0.00" y="14.25" width="23.75" height="1.3" fill="#5b5d6e" opacity="0.6"/><rect x="0.00" y="16.25" width="23.75" height="1.3" fill="#5b5d6e" opacity="0.6"/><rect x="0.00" y="18.25" width="11.40" height="1.3" fill="#5b5d6e" opacity="0.6"/><rect x="0.00" y="20.25" width="13.30" height="1.3" fill="#5b5d6e" opacity="0.6"/><rect x="0.00" y="22.25" width="41.80" height="1.3" fill="#5b5d6e" opacity="0.6"/><rect x="0.00" y="24.25" width="34.20" height="1.3" fill="#5b5d6e" opacity="0.6"/></svg></div><div style="left:670px;top:65px;width:4px;height:948px;background:linear-gradient(to right,rgba(0,0,0,0),rgba(0,0,0,0.17))"></div><div style="left:1060px;top:65px;width:4px;height:948px;background:linear-gradient(to right,rgba(0,0,0,0),rgba(0,0,0,0.17))"></div><div style="left:1104px;top:245px;width:361px;height:15px;background:#f1f1f3"></div><div style="left:1095.5px;top:65.5px;white-space:pre;width:40px;text-align:right;font-family:Liberation Mono,monospace;font-size:13px;line-height:15px;color:#8f9697;transform:scaleX(0.8974358974358975);transform-origin:100% 0;-webkit-text-stroke:0.15px">1</div><div style="left:1095.5px;top:80.5px;white-space:pre;width:40px;text-align:right;font-family:Liberation Mono,monospace;font-size:13px;line-height:15px;color:#8f9697;transform:scaleX(0.8974358974358975);transform-origin:100% 0;-webkit-text-stroke:0.15px">2</div><div style="left:1095.5px;top:110.5px;white-space:pre;width:40px;text-align:right;font-family:Liberation Mono,monospace;font-size:13px;line-height:15px;color:#8f9697;transform:scaleX(0.8974358974358975);transform-origin:100% 0;-webkit-text-stroke:0.15px">3</div><div style="left:1095.5px;top:125.5px;white-space:pre;width:40px;text-align:right;font-family:Liberation Mono,monospace;font-size:13px;line-height:15px;color:#8f9697;transform:scaleX(0.8974358974358975);transform-origin:100% 0;-webkit-text-stroke:0.15px">4</div><div style="left:1095.5px;top:155.5px;white-space:pre;width:40px;text-align:right;font-family:Liberation Mono,monospace;font-size:13px;line-height:15px;color:#8f9697;transform:scaleX(0.8974358974358975);transform-origin:100% 0;-webkit-text-stroke:0.15px">5</div><div style="left:1095.5px;top:185.5px;white-space:pre;width:40px;text-align:right;font-family:Liberation Mono,monospace;font-size:13px;line-height:15px;color:#8f9697;transform:scaleX(0.8974358974358975);transform-origin:100% 0;-webkit-text-stroke:0.15px">6</div><div style="left:1095.5px;top:200.5px;white-space:pre;width:40px;text-align:right;font-family:Liberation Mono,monospace;font-size:13px;line-height:15px;color:#8f9697;transform:scaleX(0.8974358974358975);transform-origin:100% 0;-webkit-text-stroke:0.15px">7</div><div style="left:1095.5px;top:215.5px;white-space:pre;width:40px;text-align:right;font-family:Liberation Mono,monospace;font-size:13px;line-height:15px;color:#8f9697;transform:scaleX(0.8974358974358975);transform-origin:100% 0;-webkit-text-stroke:0.15px">8</div><div style="left:1095.5px;top:230.5px;white-space:pre;width:40px;text-align:right;font-family:Liberation Mono,monospace;font-size:13px;line-height:15px;color:#8f9697;transform:scaleX(0.8974358974358975);transform-origin:100% 0;-webkit-text-stroke:0.15px">9</div><div style="left:1095.5px;top:245.5px;white-space:pre;width:40px;text-align:right;font-family:Liberation Mono,monospace;font-size:13px;line-height:15px;color:#2e2e2e;transform:scaleX(0.8974358974358975);transform-origin:100% 0;-webkit-text-stroke:0.15px">10</div><div style="left:1149px;top:62px;width:310px;height:373px;background:#fdfbf7;border-radius:0 0 3px 3px;box-shadow:0 2px 7px rgba(0,0,0,0.32)"></div><div style="left:1156px;top:72px;width:296px;height:23px;background:#fff;border:1px solid #b4b0ad"></div><div style="left:1160px;top:75px;width:2px;height:17px;background:#5f6466"></div><div style="left:1155px;top:100px;width:298px;height:41px;background:#dcd6ea;border-left:1px solid #aaa5c0;border-right:1px solid #aaa5c0;border-bottom:1px solid #c6c0d8;box-shadow:inset 0 1px 0 #e9e4f3"></div><div style="left:1162px;top:104px;white-space:pre;font-size:13.7px;color:#555;line-height:17px">.env.test.local</div><div style="left:1162px;top:122px;white-space:pre;font-size:11.8px;color:#8a8a8a;line-height:14px">.env.test.local</div><div style="left:1155px;top:141px;width:298px;height:41px;background:#dcd6ea;border-left:1px solid #aaa5c0;border-right:1px solid #aaa5c0;border-bottom:1px solid #c6c0d8;box-shadow:inset 0 1px 0 #e9e4f3"></div><div style="left:1162px;top:145px;white-space:pre;font-size:13.7px;color:#555;line-height:17px">.dockerignore</div><div style="left:1162px;top:163px;white-space:pre;font-size:11.8px;color:#8a8a8a;line-height:14px">.dockerignore</div><div style="left:1155px;top:182px;width:298px;height:41px;background:#dcd6ea;border-left:1px solid #aaa5c0;border-right:1px solid #aaa5c0;border-bottom:1px solid #c6c0d8;box-shadow:inset 0 1px 0 #e9e4f3"></div><div style="left:1162px;top:186px;white-space:pre;font-size:13.7px;color:#555;line-height:17px">.env</div><div style="left:1162px;top:204px;white-space:pre;font-size:11.8px;color:#8a8a8a;line-height:14px">.env</div><div style="left:1155px;top:223px;width:298px;height:41px;background:#dcd6ea;border-left:1px solid #aaa5c0;border-right:1px solid #aaa5c0;border-bottom:1px solid #c6c0d8;box-shadow:inset 0 1px 0 #e9e4f3"></div><div style="left:1162px;top:227px;white-space:pre;font-size:13.7px;color:#555;line-height:17px">.env.local</div><div style="left:1162px;top:245px;white-space:pre;font-size:11.8px;color:#8a8a8a;line-height:14px">.env.local</div><div style="left:1155px;top:264px;width:298px;height:41px;background:#dcd6ea;border-left:1px solid #aaa5c0;border-right:1px solid #aaa5c0;border-bottom:1px solid #c6c0d8;box-shadow:inset 0 1px 0 #e9e4f3"></div><div style="left:1162px;top:268px;white-space:pre;font-size:13.7px;color:#555;line-height:17px">.env.local.template</div><div style="left:1162px;top:286px;white-space:pre;font-size:11.8px;color:#8a8a8a;line-height:14px">.env.local.template</div><div style="left:1155px;top:305px;width:298px;height:41px;background:#dcd6ea;border-left:1px solid #aaa5c0;border-right:1px solid #aaa5c0;border-bottom:1px solid #c6c0d8;box-shadow:inset 0 1px 0 #e9e4f3"></div><div style="left:1162px;top:309px;white-space:pre;font-size:13.7px;color:#555;line-height:17px">.env.template</div><div style="left:1162px;top:327px;white-space:pre;font-size:11.8px;color:#8a8a8a;line-height:14px">.env.template</div><div style="left:1155px;top:346px;width:298px;height:41px;background:#dcd6ea;border-left:1px solid #aaa5c0;border-right:1px solid #aaa5c0;border-bottom:1px solid #c6c0d8;box-shadow:inset 0 1px 0 #e9e4f3"></div><div style="left:1162px;top:350px;white-space:pre;font-size:13.7px;color:#555;line-height:17px">.env.test</div><div style="left:1162px;top:368px;white-space:pre;font-size:11.8px;color:#8a8a8a;line-height:14px">.env.test</div><div style="left:1155px;top:387px;width:298px;height:41px;background:#dcd6ea;border-left:1px solid #aaa5c0;border-right:1px solid #aaa5c0;border-bottom:1px solid #c6c0d8;box-shadow:inset 0 1px 0 #e9e4f3"></div><div style="left:1162px;top:391px;white-space:pre;font-size:13.7px;color:#555;line-height:17px">.env.test.local.template</div><div style="left:1162px;top:409px;white-space:pre;font-size:11.8px;color:#8a8a8a;line-height:14px">.env.test.local.template</div><div style="left:0px;top:1013px;width:1505px;height:40px;background:linear-gradient(#e2dcdc,#dcd6d6 40%,#ccc6c6);border-top:1px solid #b9b4b4"></div><div style="left:6px;top:1019px;width:104px;height:27px;background:linear-gradient(#e6e1e1,#dcd7d7);border:1px solid #c6c1c1;border-radius:3px;overflow:hidden"></div><div style="left:41px;top:1019px;width:34px;height:27px;background:#c3c1c1;border-top:1px solid #b3b0b0;border-bottom:1px solid #b9b6b6"></div><div style="left:41px;top:1019px;width:1px;height:27px;background:#bdb9b9"></div><div style="left:75px;top:1019px;width:1px;height:27px;background:#bdb9b9"></div><div style="left:114px;top:1019px;width:70px;height:27px;background:linear-gradient(#e6e1e1,#dcd7d7);border:1px solid #c6c1c1;border-radius:3px;overflow:hidden"></div><div style="left:114.5px;top:1019px;width:34.5px;height:27px;background:#c3c1c1;border-top:1px solid #b3b0b0;border-bottom:1px solid #b9b6b6"></div><div style="left:149px;top:1019px;width:1px;height:27px;background:#bdb9b9"></div><div style="left:188px;top:1019px;width:36px;height:27px;background:linear-gradient(#e6e1e1,#dcd7d7);border:1px solid #c6c1c1;border-radius:3px;overflow:hidden"></div><div style="left:188.5px;top:1019px;width:35.0px;height:27px;background:#c3c1c1;border-top:1px solid #b3b0b0;border-bottom:1px solid #b9b6b6"></div><div style="left:6px;top:1019px;width:104px;height:27px;border:1px solid #c3bebe;border-radius:3px"></div><div style="left:114px;top:1019px;width:70px;height:27px;border:1px solid #c3bebe;border-radius:3px"></div><div style="left:188px;top:1019px;width:36px;height:27px;border:1px solid #b7b3b3;border-radius:3px"></div><div style="left:6px;top:1019px;width:240px;height:27px"><svg width="240" height="27" viewBox="62 1057 240 27"><rect x="73" y="1074.6" width="2.4" height="2.4" fill="#5a5a5a"/><path d="M83.6 1065.3 L83.6 1073.7 M79.8 1067.3 L87.4 1071.7 M87.4 1067.3 L79.8 1071.7" stroke="#5a5a5a" stroke-width="1.5"/><text x="104.2" y="1077.2" font-family="Liberation Sans" font-size="16.5" fill="#53478b" stroke="#53478b" stroke-width="0.5">Aa</text><circle cx="140.5" cy="1072" r="1.6" fill="#5a5a5a"/><path d="M139.2 1072 Q139.2 1068 142 1067" fill="none" stroke="#5a5a5a" stroke-width="1.2"/><circle cx="144.7" cy="1072" r="1.6" fill="#5a5a5a"/><path d="M143.39999999999998 1072 Q143.39999999999998 1068 146.2 1067" fill="none" stroke="#5a5a5a" stroke-width="1.2"/><circle cx="152.0" cy="1069.5" r="1.6" fill="#5a5a5a"/><path d="M153.3 1069.5 Q153.3 1073.5 150.5 1074.5" fill="none" stroke="#5a5a5a" stroke-width="1.2"/><circle cx="156.2" cy="1069.5" r="1.6" fill="#5a5a5a"/><path d="M157.5 1069.5 Q157.5 1073.5 154.7 1074.5" fill="none" stroke="#5a5a5a" stroke-width="1.2"/><path d="M187.2 1065.2 A5.6 5.6 0 1 0 186.5 1076.4" fill="none" stroke="#53478b" stroke-width="1.3"/><path d="M184.8 1062.8 L188.6 1065.2 L185 1067.4 Z" fill="#53478b"/><path d="M189.2 1068.2 H196 M189.2 1071.3 H196 M189.2 1074.4 H196" stroke="#53478b" stroke-width="1.2"/><rect x="214.3" y="1065.3" width="15.2" height="10.4" fill="none" stroke="#5a5a5a" stroke-width="1.1" stroke-dasharray="2 1.4"/><path d="M212.6 1070.5 H218" stroke="#5a5a5a" stroke-width="1.1"/><path d="M217 1068.3 L220.2 1070.5 L217 1072.7 Z" fill="#5a5a5a"/><rect x="254.2" y="1065.4" width="15.4" height="10" rx="1.6" fill="none" stroke="#53478b" stroke-width="1.3"/></svg></div><div style="left:229px;top:1020px;width:937px;height:26px;background:#f0f0f0;border:1px solid #b9b6b6;border-top-color:#a9a6a6;box-shadow:0 1px 0 #f2efef"></div><div style="left:1149px;top:1029px;width:11px;height:9px;"><svg width="11" height="9" viewBox="0 0 11 9"><path d="M0 0 L11 0 L5.5 9 Z" fill="#a9a9a9"/></svg></div><div style="left:1172px;top:1020px;width:98px;height:24px;background:linear-gradient(#f1f0f0,#e4e2e2);border:1px solid #cfcaca;border-radius:3px;text-align:center;font-size:12px;line-height:22px;color:#333">Find</div><div style="left:1276px;top:1020px;width:98px;height:24px;background:linear-gradient(#f1f0f0,#e4e2e2);border:1px solid #cfcaca;border-radius:3px;text-align:center;font-size:12px;line-height:22px;color:#333">Find Prev</div><div style="left:1379px;top:1020px;width:100px;height:24px;background:linear-gradient(#f1f0f0,#e4e2e2);border:1px solid #cfcaca;border-radius:3px;text-align:center;font-size:12px;line-height:22px;color:#333">Find All</div><div style="left:1487px;top:1023px;width:9px;height:9px;"><svg width="9" height="9" viewBox="0 0 9 9"><path d="M1 1 L8 8 M8 1 L1 8" stroke="#9a9a9a" stroke-width="1.6"/></svg></div><div style="left:0px;top:1053px;width:1505px;height:22px;background:linear-gradient(#c8c3c3 0px,#c8c3c3 1px,#b2adad 1.5px,#a19c9c 20px,#bcb7b7 21px);border-top:1px solid #9a9595"></div><div style="left:11px;top:1058px;width:14px;height:12px;border:1.5px solid #6b6868;border-radius:2px;background:linear-gradient(to right,#6b6868 38%,transparent 38%)"></div><div style="left:36px;top:1056px;white-space:pre;font-size:11.7px;color:#3b3838;line-height:16px">Git branch: main, index: ✓, working: 2≠, main*, Line 10, Column 34</div><div style="left:1118px;top:1055px;width:14px;height:16px"><svg width="14" height="16" viewBox="1174 1093 14 16"><path d="M1178.4 1097 V1106.3 M1178.4 1103.5 Q1178.6 1101 1183.4 1099" fill="none" stroke="#6e6a6a" stroke-width="1"/><circle cx="1178.4" cy="1097.2" r="1.3" fill="#6e6a6a"/><circle cx="1178.4" cy="1106.2" r="1.4" fill="#6e6a6a"/><circle cx="1183.6" cy="1098.6" r="1.3" fill="#6e6a6a"/></svg></div><div style="left:1134px;top:1056px;white-space:pre;font-size:12px;color:#3b3838;line-height:16px">main</div><div style="left:1163px;top:1058px;width:12px;height:12px;border:1px solid #9d9898;border-radius:2px;font-size:10px;color:#5f5b5b;text-align:center;line-height:10px">2</div><div style="left:1230px;top:1056px;white-space:pre;font-size:12px;color:#3b3838;line-height:16px">UTF-8</div><div style="left:1321px;top:1056px;white-space:pre;font-size:12px;color:#3b3838;line-height:16px">Spaces: 2</div><div style="left:1422px;top:1056px;white-space:pre;font-size:12px;color:#3b3838;line-height:16px">Plain Text</div></div>
</body></html>
